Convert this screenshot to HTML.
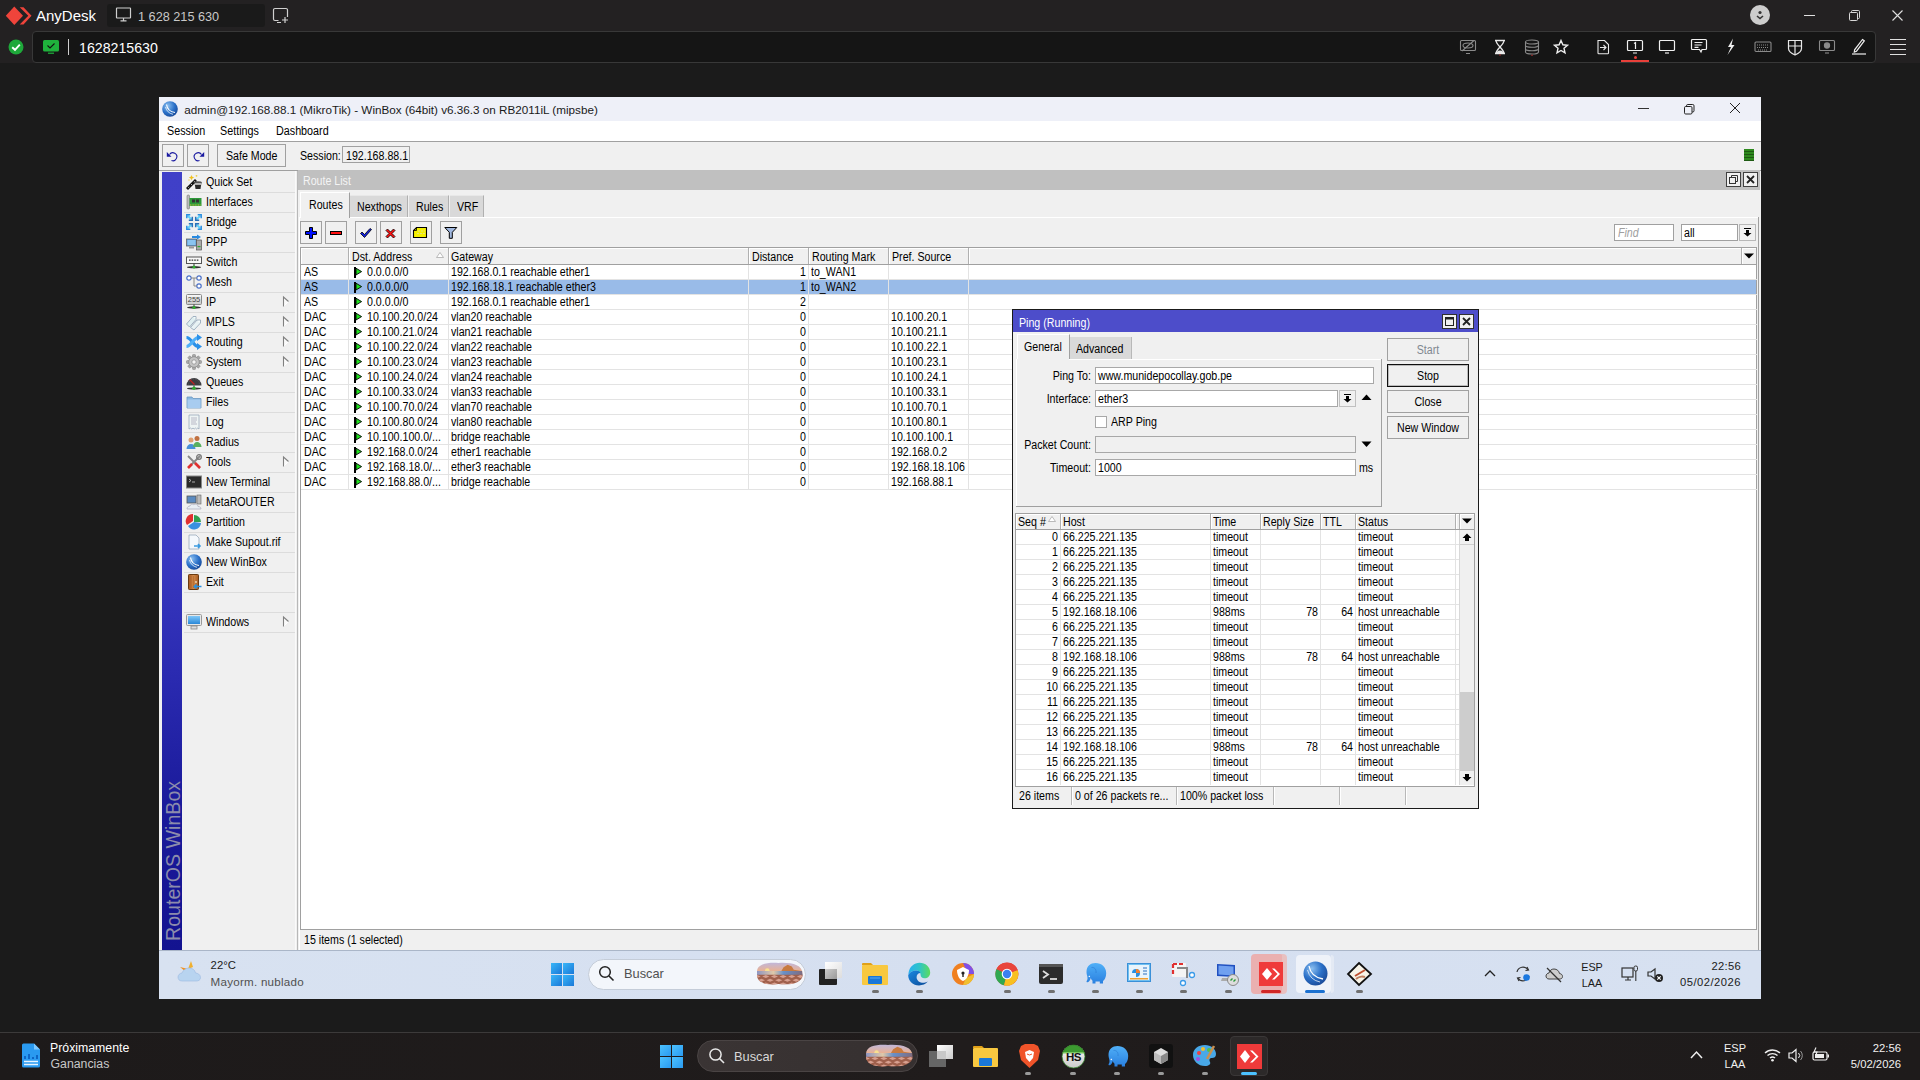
<!DOCTYPE html>
<html><head><meta charset="utf-8">
<style>
*{margin:0;padding:0;box-sizing:border-box}
html,body{width:1920px;height:1080px;overflow:hidden;background:#1b1b1b;font-family:"Liberation Sans",sans-serif;position:relative}
.a{position:absolute}
.t{position:absolute;white-space:nowrap;line-height:1}
svg.a{overflow:visible}
</style></head><body>
<div class="a" style="left:0;top:0;width:1920px;height:63px;background:#232122"></div>
<svg class="a" style="left:4px;top:5px" width="28" height="22" viewBox="0 0 28 22"><path d="M10.3 1.5 L19 10.8 L10.3 20 L1.8 10.8 Z" fill="#ef443b"/><path d="M17.2 2.2 L25.8 10.8 L17.2 19.5 L21 19.5 L29 10.8 L21 2.2 Z" fill="#ef443b" transform="translate(-1.5,0)"/></svg>
<div class="t" style="left:36px;top:7.8px;font-size:15px;color:#fff">AnyDesk</div>
<div class="a" style="left:107px;top:4px;width:158px;height:23px;background:#1a1a1a;border-radius:3px"></div>
<svg class="a" style="left:115px;top:7px" width="18" height="16" viewBox="0 0 18 16" fill="none" stroke="#cfcfcf" stroke-width="1.2"><rect x="1.5" x2="0" y="1" width="14" height="10" rx="0.5"/><path d="M8.5 11v2.5M5.5 13.8h6"/></svg>
<div class="t" style="left:138px;top:10.8px;font-size:12.7px;color:#c8c8c8">1 628 215 630</div>
<svg class="a" style="left:272px;top:7px" width="18" height="17" viewBox="0 0 18 17" fill="none" stroke="#d0d0d0" stroke-width="1.2"><path d="M6.5 13.5H3a1.5 1.5 0 0 1-1.5-1.5V3A1.5 1.5 0 0 1 3 1.5h11A1.5 1.5 0 0 1 15.5 3v7"/><path d="M13 10v6M10 13h6M5 15.5h4"/></svg>
<div class="a" style="left:1750px;top:5px;width:20px;height:20px;border-radius:50%;background:#cdcdcd"></div>
<svg class="a" style="left:1752px;top:7px" width="16" height="16" viewBox="0 0 16 16"><circle cx="8" cy="5.5" r="1.6" fill="#333"/><path d="M5 9 L8 11.5 L11 9" stroke="#333" stroke-width="1.6" fill="none"/></svg>
<div class="a" style="left:1804px;top:15px;width:11px;height:1px;background:#e0e0e0"></div>
<svg class="a" style="left:1848px;top:9px" width="13" height="13" viewBox="0 0 13 13" fill="none" stroke="#d8d8d8" stroke-width="1"><rect x="1.5" y="3.5" width="8" height="8" rx="1"/><path d="M3.5 3.5V2.5a1 1 0 0 1 1-1h6a1 1 0 0 1 1 1v6a1 1 0 0 1-1 1h-1"/></svg>
<svg class="a" style="left:1892px;top:9.5px" width="11" height="11" viewBox="0 0 11 11" stroke="#e0e0e0" stroke-width="1.1"><path d="M.5 .5L10.5 10.5M10.5 .5L.5 10.5"/></svg>
<div class="a" style="left:32px;top:31px;width:1844px;height:32px;background:#151515;border:1px solid #383838;border-radius:4px"></div>
<svg class="a" style="left:8px;top:39px" width="16" height="16" viewBox="0 0 16 16"><circle cx="8" cy="8" r="7.5" fill="#1ea83a"/><path d="M4.2 8.2 L7 10.8 L11.8 5.6" stroke="#fff" stroke-width="1.9" fill="none"/></svg>
<svg class="a" style="left:42px;top:39px" width="18" height="16" viewBox="0 0 18 16"><rect x="1" y="1" width="16" height="11.5" rx="1.5" fill="#1fb23c"/><path d="M5.5 6.5 L8 9 L12.5 4.5" stroke="#111" stroke-width="1.1" fill="none"/><rect x="6" y="13.6" width="6" height="1.2" fill="#1fb23c"/></svg>
<div class="a" style="left:68px;top:39px;width:1px;height:16px;background:#cfcfcf"></div>
<div class="t" style="left:79px;top:40.7px;font-size:14.2px;color:#fff">1628215630</div>
<svg class="a" style="left:1459px;top:39px" width="18" height="16" viewBox="0 0 18 16" fill="none" stroke="#8a8a8a" stroke-width="1.1"><rect x="1.5" y="1.5" width="15" height="10" rx="1"/><ellipse cx="9" cy="6.5" rx="5" ry="2.5"/><path d="M3 12 L15 1.5M7 14.5h4"/></svg>
<svg class="a" style="left:1493px;top:39px" width="14" height="17" viewBox="0 0 14 17" fill="none" stroke="#e8e8e8" stroke-width="1.3"><path d="M2 1.5h10M2 14.5h10M3 1.5 C3 6 11 10 11 14.5M11 1.5 C11 6 3 10 3 14.5"/><path d="M4 13.5 Q7 11 10 13.5Z" fill="#e8e8e8"/><circle cx="7" cy="16" r="0.8" fill="#b03030" stroke="none"/></svg>
<svg class="a" style="left:1524px;top:39px" width="16" height="17" viewBox="0 0 16 17" fill="none" stroke="#8a8a8a" stroke-width="1.1"><ellipse cx="8" cy="3" rx="6.5" ry="2"/><path d="M1.5 3v10c0 1.2 3 2 6.5 2s6.5-.8 6.5-2V3M1.5 6.3c0 1.2 3 2 6.5 2s6.5-.8 6.5-2M1.5 9.7c0 1.2 3 2 6.5 2s6.5-.8 6.5-2"/><circle cx="8" cy="16.3" r="0.8" fill="#b03030" stroke="none"/></svg>
<svg class="a" style="left:1553px;top:39px" width="16" height="16" viewBox="0 0 16 16" fill="none" stroke="#f0f0f0" stroke-width="1.4"><path d="M8 1.5 L9.9 5.8 L14.5 6.2 L11 9.3 L12 13.9 L8 11.5 L4 13.9 L5 9.3 L1.5 6.2 L6.1 5.8 Z"/></svg>
<svg class="a" style="left:1596px;top:39px" width="14" height="16" viewBox="0 0 14 16" fill="none" stroke="#e8e8e8" stroke-width="1.1"><path d="M2 1.5h6.5L12.5 5.5V14a.8.8 0 0 1-.8.8H2.8A.8.8 0 0 1 2 14Z"/><path d="M4 8.5h6M7.5 6L10 8.5 7.5 11"/></svg>
<svg class="a" style="left:1626px;top:39px" width="18" height="16" viewBox="0 0 18 16" fill="none" stroke="#f0f0f0" stroke-width="1.2"><rect x="1.5" y="1.5" width="15" height="10" rx="1"/><path d="M7 14h4M8 4.5l1.5-1v6.5"/></svg>
<div class="a" style="left:1634px;top:56px;width:3px;height:3px;border-radius:50%;background:#e8403a"></div>
<div class="a" style="left:1621px;top:60px;width:28px;height:2px;background:#e8403a"></div>
<svg class="a" style="left:1658px;top:39px" width="18" height="16" viewBox="0 0 18 16" fill="none" stroke="#f0f0f0" stroke-width="1.2"><rect x="1.5" y="1.5" width="15" height="10" rx="1"/><path d="M7 14h4"/></svg>
<svg class="a" style="left:1690px;top:38px" width="18" height="17" viewBox="0 0 18 17" fill="none" stroke="#f0f0f0" stroke-width="1.2"><path d="M2.5 1.5h13a1 1 0 0 1 1 1v8a1 1 0 0 1-1 1H12l-1 2.5-1.5-2.5H2.5a1 1 0 0 1-1-1v-8a1 1 0 0 1 1-1Z"/><path d="M4.5 4.5h8M4.5 7h7M4.5 9.3h4"/></svg>
<svg class="a" style="left:1726px;top:38px" width="10" height="18" viewBox="0 0 10 18" fill="#f0f0f0"><path d="M7 0.5 L2 9 L5 9 L1.5 17 L8.5 7 L5.5 7 Z"/></svg>
<svg class="a" style="left:1754px;top:41px" width="18" height="12" viewBox="0 0 18 12" fill="none" stroke="#8a8a8a" stroke-width="1.1"><rect x="1" y="1" width="16" height="9.5" rx="1"/><path d="M3 4h12M3 6.5h12M4 9h10" stroke-dasharray="1 1"/></svg>
<svg class="a" style="left:1787px;top:39px" width="16" height="17" viewBox="0 0 16 17" fill="none" stroke="#e8e8e8" stroke-width="1.2"><path d="M1.5 1.5h13v8c0 3-3 5-6.5 6.5C4.5 14.5 1.5 12.5 1.5 9.5Z"/><path d="M8 1.5V16M1.5 7h13"/></svg>
<svg class="a" style="left:1818px;top:39px" width="18" height="16" viewBox="0 0 18 16" fill="none" stroke="#8a8a8a" stroke-width="1.1"><rect x="1.5" y="1.5" width="15" height="10" rx="1"/><circle cx="9" cy="6.5" r="2.6" fill="#8a8a8a"/><path d="M7 14h4"/></svg>
<svg class="a" style="left:1851px;top:38px" width="16" height="17" viewBox="0 0 16 17" fill="none" stroke="#f0f0f0" stroke-width="1.2"><path d="M11.5 1.5 L13.3 2.8 L5.5 13.2 L3.3 14 L3.6 11.8 Z"/><path d="M1 16h14"/></svg>
<div class="a" style="left:1890px;top:39px;width:16px;height:1px;background:#e0e0e0"></div>
<div class="a" style="left:1890px;top:44px;width:16px;height:1px;background:#e0e0e0"></div>
<div class="a" style="left:1890px;top:49px;width:16px;height:1px;background:#e0e0e0"></div>
<div class="a" style="left:1890px;top:54px;width:16px;height:1px;background:#e0e0e0"></div>
<div class="a" style="left:159px;top:97px;width:1602px;height:853px;background:#f0f0f0;"></div>
<div class="a" style="left:159px;top:97px;width:1602px;height:24px;background:#eef0f8;"></div>
<svg class="a" style="left:162px;top:101px" width="16" height="16" viewBox="0 0 16 16"><defs><radialGradient id="wg" cx="35%" cy="30%" r="75%"><stop offset="0" stop-color="#8cc0f0"/><stop offset=".6" stop-color="#2a70c8"/><stop offset="1" stop-color="#1a4a98"/></radialGradient></defs><circle cx="8" cy="8" r="7.8" fill="url(#wg)"/><path d="M4.5 3.5 Q5.5 10.5 13 11.5" stroke="#fff" stroke-width="1.1" fill="none"/><path d="M3.5 6 Q5 12 11 13.3" stroke="#fff" stroke-width=".9" fill="none" opacity=".8"/></svg>
<div class="t" style="left:184.30px;top:104.10px;font-size:11.7px;color:#1a1a1a;">admin@192.168.88.1 (MikroTik) - WinBox (64bit) v6.36.3 on RB2011iL (mipsbe)</div>
<div class="a" style="left:1638px;top:108px;width:11px;height:1px;background:#333;"></div>
<svg class="a" style="left:1683px;top:103px" width="12" height="12" viewBox="0 0 12 12"><rect x="1.5" y="3.5" width="7.5" height="7.5" rx="1.2" fill="none" stroke="#222" stroke-width="1"/><path d="M3.5 3.5V2.8a1.3 1.3 0 0 1 1.3-1.3h4.9a1.3 1.3 0 0 1 1.3 1.3v4.9a1.3 1.3 0 0 1-1.3 1.3H9" fill="none" stroke="#222" stroke-width="1"/></svg>
<svg class="a" style="left:1729px;top:102px" width="12" height="12" viewBox="0 0 12 12"><path d="M1 1L11 11M11 1L1 11" stroke="#222" stroke-width="1"/></svg>
<div class="a" style="left:159px;top:121px;width:1602px;height:20px;background:#ffffff;"></div>
<div class="t" style="left:167.20px;top:124.59px;font-size:12.3px;color:#000;transform:scaleX(0.875);transform-origin:0 0;">Session</div>
<div class="t" style="left:220.00px;top:124.59px;font-size:12.3px;color:#000;transform:scaleX(0.875);transform-origin:0 0;">Settings</div>
<div class="t" style="left:276.30px;top:124.59px;font-size:12.3px;color:#000;transform:scaleX(0.875);transform-origin:0 0;">Dashboard</div>
<div class="a" style="left:159px;top:141px;width:1602px;height:1px;background:#a0a0a0;"></div>
<div class="a" style="left:162px;top:144px;width:22px;height:23px;border:1px solid #a0a0a0;"></div>
<div class="a" style="left:187px;top:144px;width:22px;height:23px;border:1px solid #a0a0a0;"></div>
<svg class="a" style="left:166px;top:150px" width="14" height="12" viewBox="0 0 14 12"><path d="M3.5 4.5 A4 4 0 1 1 5.5 10.5" stroke="#1a1aa0" stroke-width="1.1" fill="none"/><path d="M0.8 2 L0.8 6.8 L5.5 6.8 Z" fill="#1a1aa0"/></svg>
<svg class="a" style="left:191px;top:150px" width="14" height="12" viewBox="0 0 14 12"><path d="M10.5 4.5 A4 4 0 1 0 8.5 10.5" stroke="#1a1aa0" stroke-width="1.1" fill="none"/><path d="M13.2 2 L13.2 6.8 L8.5 6.8 Z" fill="#1a1aa0"/></svg>
<div class="a" style="left:217px;top:144px;width:69px;height:23px;border:1px solid #a0a0a0;"></div>
<div class="t" style="left:226.00px;top:149.59px;font-size:12.3px;color:#000;transform:scaleX(0.865);transform-origin:0 0;">Safe Mode</div>
<div class="t" style="left:300.20px;top:149.59px;font-size:12.3px;color:#000;transform:scaleX(0.865);transform-origin:0 0;">Session:</div>
<div class="a" style="left:342px;top:146px;width:68px;height:17px;background:#f0f0f0;border:1px solid #a0a0a0;"></div>
<div class="t" style="left:345.50px;top:149.59px;font-size:12.3px;color:#000;transform:scaleX(0.865);transform-origin:0 0;">192.168.88.1</div>
<div class="a" style="left:1744px;top:149px;width:10px;height:12px;background:#2a7a1a;background:repeating-linear-gradient(#2e8a1e 0 2px,#1e5a12 2px 3px)"></div>
<div class="a" style="left:159px;top:170px;width:1602px;height:1px;background:#a0a0a0;"></div>
<div class="a" style="left:162px;top:172px;width:20px;height:778px;background:linear-gradient(#4040c8 0%,#3c3cc4 45%,#2a2ab0 65%,#1a1a9a 82%,#131390 100%)"></div>
<svg class="a" style="left:186px;top:174px" width="16" height="16" viewBox="0 0 16 16"><path d="M1 15 L10 6" stroke="#111" stroke-width="2.8"/><path d="M2.2 13.8 L3.2 12.8M5 11L6 10M7.8 8.2L8.8 7.2" stroke="#ccc" stroke-width=".9"/><path d="M8.5 8.5 H15.5 L14.5 15 H9.5 Z" fill="#2a2a2a"/><ellipse cx="12" cy="8.5" rx="3.8" ry="1.3" fill="#555"/><path d="M9 10h6" stroke="#ddd" stroke-width="1.5"/><path d="M5.5 1l.8 1.8 1.8.8-1.8.8-.8 1.8-.8-1.8-1.8-.8 1.8-.8z" fill="#f0c020"/><circle cx="10.5" cy="1.8" r=".9" fill="#f0d040"/><circle cx="3" cy="6" r=".7" fill="#f0d040"/></svg>
<div class="t" style="left:205.80px;top:175.59px;font-size:12.3px;color:#000;transform:scaleX(0.865);transform-origin:0 0;">Quick Set</div>
<div class="a" style="left:184px;top:192px;width:111px;height:1px;background:#dcdcdc;"></div>
<svg class="a" style="left:186px;top:194px" width="16" height="16" viewBox="0 0 16 16"><rect x="1" y="1" width="2.5" height="14" rx="1" fill="#bbb" stroke="#777" stroke-width=".6"/><rect x="3.5" y="4" width="12" height="8" fill="#2e9a3a"/><rect x="6" y="5.5" width="3" height="3" fill="#333"/><rect x="10" y="5.5" width="3" height="3" fill="#333"/><path d="M4 11h11" stroke="#d0c040" stroke-width="1.2" stroke-dasharray="1 .6"/></svg>
<div class="t" style="left:205.80px;top:195.59px;font-size:12.3px;color:#000;transform:scaleX(0.865);transform-origin:0 0;">Interfaces</div>
<div class="a" style="left:184px;top:212px;width:111px;height:1px;background:#dcdcdc;"></div>
<svg class="a" style="left:186px;top:214px" width="16" height="16" viewBox="0 0 16 16"><g><path d="M1.8 1.8L5.5 5.5" stroke="#60d0f8" stroke-width="2"/><path d="M0.8 4.3V0.8H4.3" stroke="#2a8ee0" stroke-width="1.5" fill="none"/><path d="M2.8 6.3H6.3V2.8" stroke="#2a70b8" stroke-width="1.5" fill="none"/></g><g transform="translate(16 0) scale(-1 1)"><path d="M1.8 1.8L5.5 5.5" stroke="#60d0f8" stroke-width="2"/><path d="M0.8 4.3V0.8H4.3" stroke="#2a8ee0" stroke-width="1.5" fill="none"/><path d="M2.8 6.3H6.3V2.8" stroke="#2a70b8" stroke-width="1.5" fill="none"/></g><g transform="translate(0 16) scale(1 -1)"><path d="M1.8 1.8L5.5 5.5" stroke="#60d0f8" stroke-width="2"/><path d="M0.8 4.3V0.8H4.3" stroke="#2a8ee0" stroke-width="1.5" fill="none"/><path d="M2.8 6.3H6.3V2.8" stroke="#2a70b8" stroke-width="1.5" fill="none"/></g><g transform="translate(16 16) scale(-1 -1)"><path d="M1.8 1.8L5.5 5.5" stroke="#60d0f8" stroke-width="2"/><path d="M0.8 4.3V0.8H4.3" stroke="#2a8ee0" stroke-width="1.5" fill="none"/><path d="M2.8 6.3H6.3V2.8" stroke="#2a70b8" stroke-width="1.5" fill="none"/></g></svg>
<div class="t" style="left:205.80px;top:215.59px;font-size:12.3px;color:#000;transform:scaleX(0.865);transform-origin:0 0;">Bridge</div>
<div class="a" style="left:184px;top:232px;width:111px;height:1px;background:#dcdcdc;"></div>
<svg class="a" style="left:186px;top:234px" width="16" height="16" viewBox="0 0 16 16"><rect x="0.5" y="5" width="10" height="7" fill="#5a9ad8" stroke="#666" stroke-width=".8"/><rect x="1.5" y="6" width="8" height="5" fill="#8ac4f0"/><rect x="3" y="12.5" width="5" height="2" fill="#999"/><rect x="10.5" y="6" width="5" height="10" fill="#aaa" stroke="#555" stroke-width=".7"/><rect x="11.5" y="12" width="3" height="1.2" fill="#3a3"/><path d="M6 3h6" stroke="#2a8ae0" stroke-width="2"/><path d="M11 0.5 L15 3 L11 5.5Z" fill="#2a8ae0"/></svg>
<div class="t" style="left:205.80px;top:235.59px;font-size:12.3px;color:#000;transform:scaleX(0.865);transform-origin:0 0;">PPP</div>
<div class="a" style="left:184px;top:252px;width:111px;height:1px;background:#dcdcdc;"></div>
<svg class="a" style="left:186px;top:254px" width="16" height="16" viewBox="0 0 16 16"><rect x="0.5" y="3" width="15" height="6.5" fill="#f8f8f8" stroke="#555" stroke-width="1"/><path d="M3 6.2h1.6M5.6 6.2h1.6M8.2 6.2h1.6M10.8 6.2h1.6" stroke="#333" stroke-width="1.3"/><ellipse cx="8" cy="13.2" rx="7" ry="1.1" fill="#333"/><path d="M8 9.5v3.5" stroke="#333" stroke-width="1"/><circle cx="8" cy="13" r="1.6" fill="#30b030"/></svg>
<div class="t" style="left:205.80px;top:255.59px;font-size:12.3px;color:#000;transform:scaleX(0.865);transform-origin:0 0;">Switch</div>
<div class="a" style="left:184px;top:272px;width:111px;height:1px;background:#dcdcdc;"></div>
<svg class="a" style="left:186px;top:274px" width="16" height="16" viewBox="0 0 16 16"><circle cx="3" cy="4" r="2.2" fill="#fff" stroke="#4a70c8" stroke-width="1.2"/><circle cx="13" cy="4" r="2.2" fill="#fff" stroke="#4a70c8" stroke-width="1.2"/><circle cx="13" cy="12" r="2.2" fill="#fff" stroke="#4a70c8" stroke-width="1.2"/><path d="M5 4h3v8h3M8 4h3" stroke="#888" stroke-width="1" fill="none"/></svg>
<div class="t" style="left:205.80px;top:275.59px;font-size:12.3px;color:#000;transform:scaleX(0.865);transform-origin:0 0;">Mesh</div>
<div class="a" style="left:184px;top:292px;width:111px;height:1px;background:#dcdcdc;"></div>
<svg class="a" style="left:186px;top:294px" width="16" height="16" viewBox="0 0 16 16"><defs><linearGradient id="ipg" x1="0" y1="0" x2="0" y2="1"><stop offset="0" stop-color="#fafafa"/><stop offset="1" stop-color="#c8c8c8"/></linearGradient></defs><rect x="0.5" y="0.5" width="15" height="10" rx="1" fill="url(#ipg)" stroke="#888" stroke-width="1"/><text x="8" y="8.3" font-size="7.5" text-anchor="middle" font-family="Liberation Sans" fill="#444">255</text><ellipse cx="8" cy="13.5" rx="7" ry="1.2" fill="#333"/><path d="M8 10.5v3" stroke="#333" stroke-width="1"/><circle cx="8" cy="13.5" r="1.6" fill="#30b030"/></svg>
<div class="t" style="left:205.80px;top:295.59px;font-size:12.3px;color:#000;transform:scaleX(0.865);transform-origin:0 0;">IP</div>
<svg class="a" style="left:282px;top:295.5px" width="8" height="12" viewBox="0 0 8 12"><path d="M1.5 1 L6.5 5.5 L1.5 10.5" fill="#fafafa" stroke="#fff" stroke-width="1"/><path d="M1.5 10.5 V1 L6.5 5.5" fill="none" stroke="#808080" stroke-width="1.1"/></svg>
<div class="a" style="left:184px;top:312px;width:111px;height:1px;background:#dcdcdc;"></div>
<svg class="a" style="left:186px;top:314px" width="16" height="16" viewBox="0 0 16 16"><path d="M0.5 10 L7 2.5 H10 V5.5 L3.5 13 Z" fill="#dfeef0" stroke="#9ab" stroke-width=".9"/><path d="M4.5 13.5 L11 6 H14.5 V9 L8 16 Z" fill="#e8f2f4" stroke="#9ab" stroke-width=".9"/><circle cx="8.8" cy="3.8" r=".7" fill="#fff"/><circle cx="13" cy="7.3" r=".7" fill="#fff"/></svg>
<div class="t" style="left:205.80px;top:315.59px;font-size:12.3px;color:#000;transform:scaleX(0.865);transform-origin:0 0;">MPLS</div>
<svg class="a" style="left:282px;top:315.5px" width="8" height="12" viewBox="0 0 8 12"><path d="M1.5 1 L6.5 5.5 L1.5 10.5" fill="#fafafa" stroke="#fff" stroke-width="1"/><path d="M1.5 10.5 V1 L6.5 5.5" fill="none" stroke="#808080" stroke-width="1.1"/></svg>
<div class="a" style="left:184px;top:332px;width:111px;height:1px;background:#dcdcdc;"></div>
<svg class="a" style="left:186px;top:334px" width="16" height="16" viewBox="0 0 16 16"><path d="M0.5 3.5 C5 3.5 8 12.5 12 12.5" stroke="#2a90e8" stroke-width="3.2" fill="none"/><path d="M0.5 12.5 C5 12.5 8 3.5 12 3.5" stroke="#50b0f8" stroke-width="3.2" fill="none"/><path d="M11 0 L16 3.5 L11 7Z M11 9 L16 12.5 L11 16Z" fill="#2a90e8"/></svg>
<div class="t" style="left:205.80px;top:335.59px;font-size:12.3px;color:#000;transform:scaleX(0.865);transform-origin:0 0;">Routing</div>
<svg class="a" style="left:282px;top:335.5px" width="8" height="12" viewBox="0 0 8 12"><path d="M1.5 1 L6.5 5.5 L1.5 10.5" fill="#fafafa" stroke="#fff" stroke-width="1"/><path d="M1.5 10.5 V1 L6.5 5.5" fill="none" stroke="#808080" stroke-width="1.1"/></svg>
<div class="a" style="left:184px;top:352px;width:111px;height:1px;background:#dcdcdc;"></div>
<svg class="a" style="left:186px;top:354px" width="16" height="16" viewBox="0 0 16 16"><g fill="#a8a8a8" stroke="#888" stroke-width=".6"><rect x="6.5" y="0.5" width="3" height="15" rx=".8"/><rect x="6.5" y="0.5" width="3" height="15" rx=".8" transform="rotate(45 8 8)"/><rect x="6.5" y="0.5" width="3" height="15" rx=".8" transform="rotate(90 8 8)"/><rect x="6.5" y="0.5" width="3" height="15" rx=".8" transform="rotate(135 8 8)"/></g><circle cx="8" cy="8" r="5.3" fill="#c4c4c4" stroke="#8a8a8a" stroke-width=".8"/><circle cx="8" cy="8" r="2.2" fill="#f4f4f4" stroke="#888" stroke-width=".7"/></svg>
<div class="t" style="left:205.80px;top:355.59px;font-size:12.3px;color:#000;transform:scaleX(0.865);transform-origin:0 0;">System</div>
<svg class="a" style="left:282px;top:355.5px" width="8" height="12" viewBox="0 0 8 12"><path d="M1.5 1 L6.5 5.5 L1.5 10.5" fill="#fafafa" stroke="#fff" stroke-width="1"/><path d="M1.5 10.5 V1 L6.5 5.5" fill="none" stroke="#808080" stroke-width="1.1"/></svg>
<div class="a" style="left:184px;top:372px;width:111px;height:1px;background:#dcdcdc;"></div>
<svg class="a" style="left:186px;top:374px" width="16" height="16" viewBox="0 0 16 16"><path d="M0.5 11.5 A7.5 7.5 0 0 1 15.5 11.5 Z" fill="#3c3c40"/><path d="M2.5 10.5 A5.5 5.5 0 0 1 13.5 10.5" stroke="#666" stroke-width=".8" fill="none" stroke-dasharray="1 1.5"/><path d="M3.5 5.5 L8.5 10.5" stroke="#c02020" stroke-width="1.3"/><ellipse cx="8" cy="14.5" rx="7" ry="1.1" fill="#333"/><path d="M8 11.5v3" stroke="#333" stroke-width="1"/><circle cx="8" cy="14.3" r="1.7" fill="#30b030"/></svg>
<div class="t" style="left:205.80px;top:375.59px;font-size:12.3px;color:#000;transform:scaleX(0.865);transform-origin:0 0;">Queues</div>
<div class="a" style="left:184px;top:392px;width:111px;height:1px;background:#dcdcdc;"></div>
<svg class="a" style="left:186px;top:394px" width="16" height="16" viewBox="0 0 16 16"><path d="M1 3h5l1 1.5h8V14H1z" fill="#8ab8e0" stroke="#6a98c0" stroke-width=".8"/><rect x="1.5" y="5.5" width="13" height="8.5" fill="#a8ccf0"/></svg>
<div class="t" style="left:205.80px;top:395.59px;font-size:12.3px;color:#000;transform:scaleX(0.865);transform-origin:0 0;">Files</div>
<div class="a" style="left:184px;top:412px;width:111px;height:1px;background:#dcdcdc;"></div>
<svg class="a" style="left:186px;top:414px" width="16" height="16" viewBox="0 0 16 16"><path d="M3 1h10v14l-1.2-1-1.2 1-1.2-1-1.2 1-1.2-1-1.2 1-1.2-1L3 15z" fill="#eef4f4" stroke="#9ab" stroke-width=".8"/><path d="M5 4h6M5 6h6M5 8h5M5 10h6" stroke="#aab" stroke-width=".8"/></svg>
<div class="t" style="left:205.80px;top:415.59px;font-size:12.3px;color:#000;transform:scaleX(0.865);transform-origin:0 0;">Log</div>
<div class="a" style="left:184px;top:432px;width:111px;height:1px;background:#dcdcdc;"></div>
<svg class="a" style="left:186px;top:434px" width="16" height="16" viewBox="0 0 16 16"><circle cx="5" cy="6" r="2.5" fill="#e0a070"/><path d="M0.5 15c0-3 2-5 4.5-5s4.5 2 4.5 5z" fill="#4a90d8"/><circle cx="11" cy="4.5" r="2.5" fill="#c07040"/><path d="M7 13c0-3 2-5 4-5s4.5 2 4.5 5z" fill="#5ab060"/></svg>
<div class="t" style="left:205.80px;top:435.59px;font-size:12.3px;color:#000;transform:scaleX(0.865);transform-origin:0 0;">Radius</div>
<div class="a" style="left:184px;top:452px;width:111px;height:1px;background:#dcdcdc;"></div>
<svg class="a" style="left:186px;top:454px" width="16" height="16" viewBox="0 0 16 16"><path d="M2 2 L14 14" stroke="#888" stroke-width="1.8"/><path d="M9 9 L14 14" stroke="#e03030" stroke-width="2.6"/><path d="M14 2 L3 13" stroke="#888" stroke-width="1.8"/><path d="M2 14 L6 10" stroke="#e03030" stroke-width="2.6"/><circle cx="13" cy="3" r="2.3" fill="none" stroke="#777" stroke-width="1.3"/></svg>
<div class="t" style="left:205.80px;top:455.59px;font-size:12.3px;color:#000;transform:scaleX(0.865);transform-origin:0 0;">Tools</div>
<svg class="a" style="left:282px;top:455.5px" width="8" height="12" viewBox="0 0 8 12"><path d="M1.5 1 L6.5 5.5 L1.5 10.5" fill="#fafafa" stroke="#fff" stroke-width="1"/><path d="M1.5 10.5 V1 L6.5 5.5" fill="none" stroke="#808080" stroke-width="1.1"/></svg>
<div class="a" style="left:184px;top:472px;width:111px;height:1px;background:#dcdcdc;"></div>
<svg class="a" style="left:186px;top:474px" width="16" height="16" viewBox="0 0 16 16"><rect x="0.5" y="2" width="15" height="12" fill="#2a2a2a" stroke="#888" stroke-width="1"/><path d="M3 5l2 1.5-2 1.5M6 8h3" stroke="#ccc" stroke-width=".8" fill="none"/></svg>
<div class="t" style="left:205.80px;top:475.59px;font-size:12.3px;color:#000;transform:scaleX(0.865);transform-origin:0 0;">New Terminal</div>
<div class="a" style="left:184px;top:492px;width:111px;height:1px;background:#dcdcdc;"></div>
<svg class="a" style="left:186px;top:494px" width="16" height="16" viewBox="0 0 16 16"><rect x="1" y="2" width="9" height="7" fill="#5a8ac0" stroke="#555" stroke-width=".8"/><rect x="11" y="1" width="4" height="9" fill="#bbb" stroke="#666" stroke-width=".6"/><path d="M1 15c0-2 1.5-3 3-3 .5-2 3-2.5 4-1 1-1.5 4-1 4 1.5 2 0 3 1 3 2.5z" fill="#e8eef4" stroke="#aab" stroke-width=".7"/></svg>
<div class="t" style="left:205.80px;top:495.59px;font-size:12.3px;color:#000;transform:scaleX(0.865);transform-origin:0 0;">MetaROUTER</div>
<div class="a" style="left:184px;top:512px;width:111px;height:1px;background:#dcdcdc;"></div>
<svg class="a" style="left:186px;top:514px" width="16" height="16" viewBox="0 0 16 16"><path d="M8 8 L8 1 A7 7 0 0 1 15 8 Z" fill="#30a050"/><path d="M8 8 L15 9 A7 7 0 0 1 2 12 Z" fill="#3a90e0"/><path d="M7 7 L1 11 A7 7 0 0 1 7 0 Z" fill="#e03030"/></svg>
<div class="t" style="left:205.80px;top:515.59px;font-size:12.3px;color:#000;transform:scaleX(0.865);transform-origin:0 0;">Partition</div>
<div class="a" style="left:184px;top:532px;width:111px;height:1px;background:#dcdcdc;"></div>
<svg class="a" style="left:186px;top:534px" width="16" height="16" viewBox="0 0 16 16"><path d="M3 1h7l3 3v11H3z" fill="#f4f8fc" stroke="#9ab" stroke-width=".8"/><path d="M8 12h6M12 10l2 2-2 2" stroke="#3a9ae0" stroke-width="1.6" fill="none"/></svg>
<div class="t" style="left:205.80px;top:535.59px;font-size:12.3px;color:#000;transform:scaleX(0.865);transform-origin:0 0;">Make Supout.rif</div>
<div class="a" style="left:184px;top:552px;width:111px;height:1px;background:#dcdcdc;"></div>
<svg class="a" style="left:186px;top:554px" width="16" height="16" viewBox="0 0 16 16"><defs><radialGradient id="nwg" cx="35%" cy="30%" r="75%"><stop offset="0" stop-color="#8cc0f0"/><stop offset=".6" stop-color="#2a70c8"/><stop offset="1" stop-color="#1a4a98"/></radialGradient></defs><circle cx="8" cy="8" r="7.8" fill="url(#nwg)"/><path d="M4.5 3.5 Q5.5 10.5 13 11.5" stroke="#fff" stroke-width="1.1" fill="none"/><path d="M3.5 6 Q5 12 11 13.3" stroke="#fff" stroke-width=".9" fill="none" opacity=".8"/></svg>
<div class="t" style="left:205.80px;top:555.59px;font-size:12.3px;color:#000;transform:scaleX(0.865);transform-origin:0 0;">New WinBox</div>
<div class="a" style="left:184px;top:572px;width:111px;height:1px;background:#dcdcdc;"></div>
<svg class="a" style="left:186px;top:574px" width="16" height="16" viewBox="0 0 16 16"><defs><linearGradient id="exg" x1="0" y1="0" x2="1" y2="0"><stop offset="0" stop-color="#a85a20"/><stop offset=".5" stop-color="#d08848"/><stop offset="1" stop-color="#a85a20"/></linearGradient></defs><rect x="2.5" y="0.5" width="10" height="15" rx=".8" fill="url(#exg)" stroke="#6a3a10" stroke-width="1"/><path d="M5 2v12M7.5 2v12" stroke="#a86028" stroke-width=".6"/><circle cx="10" cy="8" r=".9" fill="#f0e0c0"/><path d="M8 12.5h7.5M10.5 10.5l-2.2 2 2.2 2" stroke="#2a90e0" stroke-width="1.5" fill="none"/></svg>
<div class="t" style="left:205.80px;top:575.59px;font-size:12.3px;color:#000;transform:scaleX(0.865);transform-origin:0 0;">Exit</div>
<div class="a" style="left:184px;top:592px;width:111px;height:1px;background:#dcdcdc;"></div>
<div class="a" style="left:184px;top:612px;width:111px;height:1px;background:#dcdcdc;"></div>
<svg class="a" style="left:186px;top:614px" width="16" height="16" viewBox="0 0 16 16"><defs><linearGradient id="wsg" x1="0" y1="0" x2="0" y2="1"><stop offset="0" stop-color="#80c8f8"/><stop offset="1" stop-color="#2a88d8"/></linearGradient></defs><rect x="0.5" y="0.5" width="15" height="11" rx="1" fill="#e8e8e8" stroke="#999" stroke-width="1"/><rect x="2" y="2" width="12" height="8" fill="url(#wsg)"/><rect x="5" y="12" width="6" height="3" fill="#ddd" stroke="#888" stroke-width=".8"/></svg>
<div class="t" style="left:205.80px;top:615.59px;font-size:12.3px;color:#000;transform:scaleX(0.865);transform-origin:0 0;">Windows</div>
<svg class="a" style="left:282px;top:615.5px" width="8" height="12" viewBox="0 0 8 12"><path d="M1.5 1 L6.5 5.5 L1.5 10.5" fill="#fafafa" stroke="#fff" stroke-width="1"/><path d="M1.5 10.5 V1 L6.5 5.5" fill="none" stroke="#808080" stroke-width="1.1"/></svg>
<div class="a" style="left:184px;top:632px;width:111px;height:1px;background:#dcdcdc;"></div>
<div class="a" style="left:297px;top:171px;width:1px;height:779px;background:#b8b8b8;"></div>
<div class="a" style="left:295px;top:171px;width:1px;height:779px;background:#fafafa;"></div>
<div class="t" style="left:163px;top:940.5px;transform:rotate(-90deg) scale(1,1.07);transform-origin:0 0;font-size:19.6px;color:#8c8cac">RouterOS WinBox</div>
<div class="a" style="left:298px;top:170px;width:1462px;height:20px;background:#c0c0c0;"></div>
<div class="t" style="left:302.50px;top:175.09px;font-size:12.3px;color:#f4f4f4;transform:scaleX(0.865);transform-origin:0 0;">Route List</div>
<div class="a" style="left:1726px;top:172px;width:15px;height:15px;background:#f0f0f0;border:1px solid #404040;"></div>
<svg class="a" style="left:1728px;top:174px" width="11" height="11" viewBox="0 0 11 11"><rect x="1.5" y="3.5" width="6" height="6" fill="none" stroke="#333" stroke-width="1"/><path d="M3.5 3.5V1.5h6v6h-2" fill="none" stroke="#333" stroke-width="1"/></svg>
<div class="a" style="left:1743px;top:172px;width:15px;height:15px;background:#f0f0f0;border:1px solid #404040;"></div>
<svg class="a" style="left:1745px;top:174px" width="11" height="11" viewBox="0 0 11 11"><path d="M2 2L9 9M9 2L2 9" stroke="#222" stroke-width="1.8"/></svg>
<div class="a" style="left:349px;top:217px;width:1410px;height:1px;background:#ffffff;"></div>
<div class="a" style="left:1758px;top:217px;width:1px;height:733px;background:#a0a0a0;"></div>
<div class="a" style="left:299px;top:217px;width:1px;height:733px;background:#ffffff;"></div>
<div class="a" style="left:300px;top:192px;width:50px;height:26px;background:#f0f0f0;border-top:1px solid #fff;border-left:1px solid #fff;border-right:1px solid #a0a0a0"></div>
<div class="t" style="left:308.50px;top:198.59px;font-size:12.3px;color:#000;transform:scaleX(0.865);transform-origin:0 0;">Routes</div>
<div class="a" style="left:350px;top:195px;width:58px;height:22px;background:#d9d9d9;border-right:1px solid #b0b0b0;border-top:1px solid #e8e8e8"></div>
<div class="t" style="left:356.50px;top:200.59px;font-size:12.3px;color:#000;transform:scaleX(0.865);transform-origin:0 0;">Nexthops</div>
<div class="a" style="left:409px;top:195px;width:40px;height:22px;background:#d9d9d9;border-right:1px solid #b0b0b0;border-top:1px solid #e8e8e8"></div>
<div class="t" style="left:415.50px;top:200.59px;font-size:12.3px;color:#000;transform:scaleX(0.865);transform-origin:0 0;">Rules</div>
<div class="a" style="left:450px;top:195px;width:34px;height:22px;background:#d9d9d9;border-right:1px solid #b0b0b0;border-top:1px solid #e8e8e8"></div>
<div class="t" style="left:456.50px;top:200.59px;font-size:12.3px;color:#000;transform:scaleX(0.865);transform-origin:0 0;">VRF</div>
<div class="a" style="left:300px;top:221px;width:22px;height:23px;background:#f0f0f0;border:1px solid #a0a0a0;"></div>
<div class="a" style="left:325px;top:221px;width:22px;height:23px;background:#f0f0f0;border:1px solid #a0a0a0;"></div>
<div class="a" style="left:355px;top:221px;width:22px;height:23px;background:#f0f0f0;border:1px solid #a0a0a0;"></div>
<div class="a" style="left:380px;top:221px;width:22px;height:23px;background:#f0f0f0;border:1px solid #a0a0a0;"></div>
<div class="a" style="left:410px;top:221px;width:22px;height:23px;background:#f0f0f0;border:1px solid #a0a0a0;"></div>
<div class="a" style="left:440px;top:221px;width:22px;height:23px;background:#f0f0f0;border:1px solid #a0a0a0;"></div>
<svg class="a" style="left:305px;top:227px" width="12" height="12" viewBox="0 0 12 12"><path d="M4.5 .5h3v4h4v3h-4v4h-3v-4h-4v-3h4z" fill="#0010ff" stroke="#000" stroke-width="1"/></svg>
<svg class="a" style="left:330px;top:231px" width="12" height="5" viewBox="0 0 12 5"><rect x=".5" y=".5" width="11" height="3" fill="#ff1010" stroke="#000" stroke-width="1"/></svg>
<svg class="a" style="left:360px;top:228px" width="12" height="10" viewBox="0 0 12 10"><path d="M.5 5.5 L4.5 9.5 L11.5 1.5 L10 .5 L4.5 6.5 L2 4 Z" fill="#1020e0" stroke="#000" stroke-width=".8"/></svg>
<svg class="a" style="left:385px;top:228px" width="11" height="11" viewBox="0 0 11 11"><path d="M1 2.5L2.5 1 5.5 4 8.5 1 10 2.5 7 5.5 10 8.5 8.5 10 5.5 7 2.5 10 1 8.5 4 5.5Z" fill="#ff1010" stroke="#000" stroke-width=".8"/></svg>
<svg class="a" style="left:413px;top:227px" width="15" height="12" viewBox="0 0 15 12"><path d="M3.5 .5h10v10H.5V3.5Z" fill="#f4f000" stroke="#000" stroke-width="1.1"/><path d="M3.5 .5V3.5H.5" fill="none" stroke="#000" stroke-width=".8"/><path d="M5 4h7M4 6.5h8" stroke="#e0e0a0" stroke-width=".8" stroke-dasharray="2 1"/></svg>
<svg class="a" style="left:444px;top:226px" width="14" height="13" viewBox="0 0 14 13"><path d="M.8 1.5h12l-4.5 4.8v6h-3v-6Z" fill="#a0b8e0" stroke="#000" stroke-width="1"/></svg>
<div class="a" style="left:1614px;top:224px;width:60px;height:17px;background:#fff;border:1px solid #a0a0a0;"></div>
<div class="t" style="left:1617.50px;top:226.59px;font-size:12.3px;color:#a0a0a0;transform:scaleX(0.865);transform-origin:0 0;font-style:italic;">Find</div>
<div class="a" style="left:1681px;top:224px;width:57px;height:17px;background:#fff;border:1px solid #a0a0a0;"></div>
<div class="t" style="left:1684.00px;top:226.59px;font-size:12.3px;color:#000;transform:scaleX(0.865);transform-origin:0 0;">all</div>
<div class="a" style="left:1739px;top:224px;width:17px;height:17px;background:#f0f0f0;border:1px solid #b8b8b8;"></div>
<svg class="a" style="left:1742px;top:227px" width="11" height="11" viewBox="0 0 11 11"><path d="M2 1.5h7" stroke="#000" stroke-width="1"/><path d="M4 3h3v3h2.5L5.5 9.5 1.5 6H4z" fill="#000"/></svg>
<div class="a" style="left:300px;top:247px;width:1457px;height:683px;background:#ffffff;border:1px solid #a0a0a0;"></div>
<div class="a" style="left:301px;top:248px;width:1455px;height:16px;background:#f0f0f0;border-top:1px solid #fff;border-left:1px solid #fff"></div>
<div class="a" style="left:301px;top:264px;width:1455px;height:1px;background:#a0a0a0;"></div>
<div class="a" style="left:348px;top:248px;width:1px;height:16px;background:#b0b0b0;"></div>
<div class="a" style="left:349px;top:248px;width:1px;height:16px;background:#ffffff;"></div>
<div class="a" style="left:448px;top:248px;width:1px;height:16px;background:#b0b0b0;"></div>
<div class="a" style="left:449px;top:248px;width:1px;height:16px;background:#ffffff;"></div>
<div class="a" style="left:748px;top:248px;width:1px;height:16px;background:#b0b0b0;"></div>
<div class="a" style="left:749px;top:248px;width:1px;height:16px;background:#ffffff;"></div>
<div class="a" style="left:808px;top:248px;width:1px;height:16px;background:#b0b0b0;"></div>
<div class="a" style="left:809px;top:248px;width:1px;height:16px;background:#ffffff;"></div>
<div class="a" style="left:888px;top:248px;width:1px;height:16px;background:#b0b0b0;"></div>
<div class="a" style="left:889px;top:248px;width:1px;height:16px;background:#ffffff;"></div>
<div class="a" style="left:968px;top:248px;width:1px;height:16px;background:#b0b0b0;"></div>
<div class="a" style="left:969px;top:248px;width:1px;height:16px;background:#ffffff;"></div>
<div class="a" style="left:1741px;top:248px;width:1px;height:16px;background:#b0b0b0;"></div>
<div class="a" style="left:1742px;top:248px;width:1px;height:16px;background:#ffffff;"></div>
<svg class="a" style="left:1744px;top:253px" width="10" height="6" viewBox="0 0 10 6"><path d="M0 .5h10L5 5.5Z" fill="#000"/></svg>
<div class="t" style="left:351.70px;top:250.59px;font-size:12.3px;color:#000;transform:scaleX(0.865);transform-origin:0 0;">Dst. Address</div>
<svg class="a" style="left:436px;top:252px" width="8" height="6" viewBox="0 0 8 6"><path d="M4 .5L7.5 5.5H.5Z" fill="#fff" stroke="#aaa" stroke-width=".8"/></svg>
<div class="t" style="left:451.00px;top:250.59px;font-size:12.3px;color:#000;transform:scaleX(0.865);transform-origin:0 0;">Gateway</div>
<div class="t" style="left:751.50px;top:250.59px;font-size:12.3px;color:#000;transform:scaleX(0.865);transform-origin:0 0;">Distance</div>
<div class="t" style="left:811.50px;top:250.59px;font-size:12.3px;color:#000;transform:scaleX(0.865);transform-origin:0 0;">Routing Mark</div>
<div class="t" style="left:891.50px;top:250.59px;font-size:12.3px;color:#000;transform:scaleX(0.865);transform-origin:0 0;">Pref. Source</div>
<div class="a" style="left:301px;top:279px;width:1456px;height:1px;background:#e3e3e3;"></div>
<div class="t" style="left:303.80px;top:265.59px;font-size:12.3px;color:#000;transform:scaleX(0.865);transform-origin:0 0;">AS</div>
<svg class="a" style="left:353px;top:267px" width="10" height="12" viewBox="0 0 10 12"><rect x="1" y="0" width="2" height="11" fill="#000"/><path d="M3 1.2 L8.6 4.6 L3 8Z" fill="#20e020" stroke="#000" stroke-width="0.9" stroke-linejoin="miter"/></svg>
<div class="t" style="left:367.20px;top:265.59px;font-size:12.3px;color:#000;transform:scaleX(0.865);transform-origin:0 0;">0.0.0.0/0</div>
<div class="t" style="left:450.50px;top:265.59px;font-size:12.3px;color:#000;transform:scaleX(0.865);transform-origin:0 0;">192.168.0.1 reachable ether1</div>
<div class="t" style="left:766.00px;width:40px;text-align:right;top:265.59px;font-size:12.3px;color:#000;transform:scaleX(0.865);transform-origin:100% 0;">1</div>
<div class="t" style="left:810.50px;top:265.59px;font-size:12.3px;color:#000;transform:scaleX(0.865);transform-origin:0 0;">to_WAN1</div>
<div class="t" style="left:891.00px;top:265.59px;font-size:12.3px;color:#000;transform:scaleX(0.865);transform-origin:0 0;"></div>
<div class="a" style="left:301px;top:280px;width:1455px;height:14px;background:#99bbe8;"></div>
<div class="a" style="left:301px;top:294px;width:1456px;height:1px;background:#e3e3e3;"></div>
<div class="t" style="left:303.80px;top:280.59px;font-size:12.3px;color:#000;transform:scaleX(0.865);transform-origin:0 0;">AS</div>
<svg class="a" style="left:353px;top:282px" width="10" height="12" viewBox="0 0 10 12"><rect x="1" y="0" width="2" height="11" fill="#000"/><path d="M3 1.2 L8.6 4.6 L3 8Z" fill="#20e020" stroke="#000" stroke-width="0.9" stroke-linejoin="miter"/></svg>
<div class="t" style="left:367.20px;top:280.59px;font-size:12.3px;color:#000;transform:scaleX(0.865);transform-origin:0 0;">0.0.0.0/0</div>
<div class="t" style="left:450.50px;top:280.59px;font-size:12.3px;color:#000;transform:scaleX(0.865);transform-origin:0 0;">192.168.18.1 reachable ether3</div>
<div class="t" style="left:766.00px;width:40px;text-align:right;top:280.59px;font-size:12.3px;color:#000;transform:scaleX(0.865);transform-origin:100% 0;">1</div>
<div class="t" style="left:810.50px;top:280.59px;font-size:12.3px;color:#000;transform:scaleX(0.865);transform-origin:0 0;">to_WAN2</div>
<div class="t" style="left:891.00px;top:280.59px;font-size:12.3px;color:#000;transform:scaleX(0.865);transform-origin:0 0;"></div>
<div class="a" style="left:301px;top:309px;width:1456px;height:1px;background:#e3e3e3;"></div>
<div class="t" style="left:303.80px;top:295.59px;font-size:12.3px;color:#000;transform:scaleX(0.865);transform-origin:0 0;">AS</div>
<svg class="a" style="left:353px;top:297px" width="10" height="12" viewBox="0 0 10 12"><rect x="1" y="0" width="2" height="11" fill="#000"/><path d="M3 1.2 L8.6 4.6 L3 8Z" fill="#20e020" stroke="#000" stroke-width="0.9" stroke-linejoin="miter"/></svg>
<div class="t" style="left:367.20px;top:295.59px;font-size:12.3px;color:#000;transform:scaleX(0.865);transform-origin:0 0;">0.0.0.0/0</div>
<div class="t" style="left:450.50px;top:295.59px;font-size:12.3px;color:#000;transform:scaleX(0.865);transform-origin:0 0;">192.168.0.1 reachable ether1</div>
<div class="t" style="left:766.00px;width:40px;text-align:right;top:295.59px;font-size:12.3px;color:#000;transform:scaleX(0.865);transform-origin:100% 0;">2</div>
<div class="t" style="left:810.50px;top:295.59px;font-size:12.3px;color:#000;transform:scaleX(0.865);transform-origin:0 0;"></div>
<div class="t" style="left:891.00px;top:295.59px;font-size:12.3px;color:#000;transform:scaleX(0.865);transform-origin:0 0;"></div>
<div class="a" style="left:301px;top:324px;width:1456px;height:1px;background:#e3e3e3;"></div>
<div class="t" style="left:303.80px;top:310.59px;font-size:12.3px;color:#000;transform:scaleX(0.865);transform-origin:0 0;">DAC</div>
<svg class="a" style="left:353px;top:312px" width="10" height="12" viewBox="0 0 10 12"><rect x="1" y="0" width="2" height="11" fill="#000"/><path d="M3 1.2 L8.6 4.6 L3 8Z" fill="#20e020" stroke="#000" stroke-width="0.9" stroke-linejoin="miter"/></svg>
<div class="t" style="left:367.20px;top:310.59px;font-size:12.3px;color:#000;transform:scaleX(0.865);transform-origin:0 0;">10.100.20.0/24</div>
<div class="t" style="left:450.50px;top:310.59px;font-size:12.3px;color:#000;transform:scaleX(0.865);transform-origin:0 0;">vlan20 reachable</div>
<div class="t" style="left:766.00px;width:40px;text-align:right;top:310.59px;font-size:12.3px;color:#000;transform:scaleX(0.865);transform-origin:100% 0;">0</div>
<div class="t" style="left:810.50px;top:310.59px;font-size:12.3px;color:#000;transform:scaleX(0.865);transform-origin:0 0;"></div>
<div class="t" style="left:891.00px;top:310.59px;font-size:12.3px;color:#000;transform:scaleX(0.865);transform-origin:0 0;">10.100.20.1</div>
<div class="a" style="left:301px;top:339px;width:1456px;height:1px;background:#e3e3e3;"></div>
<div class="t" style="left:303.80px;top:325.59px;font-size:12.3px;color:#000;transform:scaleX(0.865);transform-origin:0 0;">DAC</div>
<svg class="a" style="left:353px;top:327px" width="10" height="12" viewBox="0 0 10 12"><rect x="1" y="0" width="2" height="11" fill="#000"/><path d="M3 1.2 L8.6 4.6 L3 8Z" fill="#20e020" stroke="#000" stroke-width="0.9" stroke-linejoin="miter"/></svg>
<div class="t" style="left:367.20px;top:325.59px;font-size:12.3px;color:#000;transform:scaleX(0.865);transform-origin:0 0;">10.100.21.0/24</div>
<div class="t" style="left:450.50px;top:325.59px;font-size:12.3px;color:#000;transform:scaleX(0.865);transform-origin:0 0;">vlan21 reachable</div>
<div class="t" style="left:766.00px;width:40px;text-align:right;top:325.59px;font-size:12.3px;color:#000;transform:scaleX(0.865);transform-origin:100% 0;">0</div>
<div class="t" style="left:810.50px;top:325.59px;font-size:12.3px;color:#000;transform:scaleX(0.865);transform-origin:0 0;"></div>
<div class="t" style="left:891.00px;top:325.59px;font-size:12.3px;color:#000;transform:scaleX(0.865);transform-origin:0 0;">10.100.21.1</div>
<div class="a" style="left:301px;top:354px;width:1456px;height:1px;background:#e3e3e3;"></div>
<div class="t" style="left:303.80px;top:340.59px;font-size:12.3px;color:#000;transform:scaleX(0.865);transform-origin:0 0;">DAC</div>
<svg class="a" style="left:353px;top:342px" width="10" height="12" viewBox="0 0 10 12"><rect x="1" y="0" width="2" height="11" fill="#000"/><path d="M3 1.2 L8.6 4.6 L3 8Z" fill="#20e020" stroke="#000" stroke-width="0.9" stroke-linejoin="miter"/></svg>
<div class="t" style="left:367.20px;top:340.59px;font-size:12.3px;color:#000;transform:scaleX(0.865);transform-origin:0 0;">10.100.22.0/24</div>
<div class="t" style="left:450.50px;top:340.59px;font-size:12.3px;color:#000;transform:scaleX(0.865);transform-origin:0 0;">vlan22 reachable</div>
<div class="t" style="left:766.00px;width:40px;text-align:right;top:340.59px;font-size:12.3px;color:#000;transform:scaleX(0.865);transform-origin:100% 0;">0</div>
<div class="t" style="left:810.50px;top:340.59px;font-size:12.3px;color:#000;transform:scaleX(0.865);transform-origin:0 0;"></div>
<div class="t" style="left:891.00px;top:340.59px;font-size:12.3px;color:#000;transform:scaleX(0.865);transform-origin:0 0;">10.100.22.1</div>
<div class="a" style="left:301px;top:369px;width:1456px;height:1px;background:#e3e3e3;"></div>
<div class="t" style="left:303.80px;top:355.59px;font-size:12.3px;color:#000;transform:scaleX(0.865);transform-origin:0 0;">DAC</div>
<svg class="a" style="left:353px;top:357px" width="10" height="12" viewBox="0 0 10 12"><rect x="1" y="0" width="2" height="11" fill="#000"/><path d="M3 1.2 L8.6 4.6 L3 8Z" fill="#20e020" stroke="#000" stroke-width="0.9" stroke-linejoin="miter"/></svg>
<div class="t" style="left:367.20px;top:355.59px;font-size:12.3px;color:#000;transform:scaleX(0.865);transform-origin:0 0;">10.100.23.0/24</div>
<div class="t" style="left:450.50px;top:355.59px;font-size:12.3px;color:#000;transform:scaleX(0.865);transform-origin:0 0;">vlan23 reachable</div>
<div class="t" style="left:766.00px;width:40px;text-align:right;top:355.59px;font-size:12.3px;color:#000;transform:scaleX(0.865);transform-origin:100% 0;">0</div>
<div class="t" style="left:810.50px;top:355.59px;font-size:12.3px;color:#000;transform:scaleX(0.865);transform-origin:0 0;"></div>
<div class="t" style="left:891.00px;top:355.59px;font-size:12.3px;color:#000;transform:scaleX(0.865);transform-origin:0 0;">10.100.23.1</div>
<div class="a" style="left:301px;top:384px;width:1456px;height:1px;background:#e3e3e3;"></div>
<div class="t" style="left:303.80px;top:370.59px;font-size:12.3px;color:#000;transform:scaleX(0.865);transform-origin:0 0;">DAC</div>
<svg class="a" style="left:353px;top:372px" width="10" height="12" viewBox="0 0 10 12"><rect x="1" y="0" width="2" height="11" fill="#000"/><path d="M3 1.2 L8.6 4.6 L3 8Z" fill="#20e020" stroke="#000" stroke-width="0.9" stroke-linejoin="miter"/></svg>
<div class="t" style="left:367.20px;top:370.59px;font-size:12.3px;color:#000;transform:scaleX(0.865);transform-origin:0 0;">10.100.24.0/24</div>
<div class="t" style="left:450.50px;top:370.59px;font-size:12.3px;color:#000;transform:scaleX(0.865);transform-origin:0 0;">vlan24 reachable</div>
<div class="t" style="left:766.00px;width:40px;text-align:right;top:370.59px;font-size:12.3px;color:#000;transform:scaleX(0.865);transform-origin:100% 0;">0</div>
<div class="t" style="left:810.50px;top:370.59px;font-size:12.3px;color:#000;transform:scaleX(0.865);transform-origin:0 0;"></div>
<div class="t" style="left:891.00px;top:370.59px;font-size:12.3px;color:#000;transform:scaleX(0.865);transform-origin:0 0;">10.100.24.1</div>
<div class="a" style="left:301px;top:399px;width:1456px;height:1px;background:#e3e3e3;"></div>
<div class="t" style="left:303.80px;top:385.59px;font-size:12.3px;color:#000;transform:scaleX(0.865);transform-origin:0 0;">DAC</div>
<svg class="a" style="left:353px;top:387px" width="10" height="12" viewBox="0 0 10 12"><rect x="1" y="0" width="2" height="11" fill="#000"/><path d="M3 1.2 L8.6 4.6 L3 8Z" fill="#20e020" stroke="#000" stroke-width="0.9" stroke-linejoin="miter"/></svg>
<div class="t" style="left:367.20px;top:385.59px;font-size:12.3px;color:#000;transform:scaleX(0.865);transform-origin:0 0;">10.100.33.0/24</div>
<div class="t" style="left:450.50px;top:385.59px;font-size:12.3px;color:#000;transform:scaleX(0.865);transform-origin:0 0;">vlan33 reachable</div>
<div class="t" style="left:766.00px;width:40px;text-align:right;top:385.59px;font-size:12.3px;color:#000;transform:scaleX(0.865);transform-origin:100% 0;">0</div>
<div class="t" style="left:810.50px;top:385.59px;font-size:12.3px;color:#000;transform:scaleX(0.865);transform-origin:0 0;"></div>
<div class="t" style="left:891.00px;top:385.59px;font-size:12.3px;color:#000;transform:scaleX(0.865);transform-origin:0 0;">10.100.33.1</div>
<div class="a" style="left:301px;top:414px;width:1456px;height:1px;background:#e3e3e3;"></div>
<div class="t" style="left:303.80px;top:400.59px;font-size:12.3px;color:#000;transform:scaleX(0.865);transform-origin:0 0;">DAC</div>
<svg class="a" style="left:353px;top:402px" width="10" height="12" viewBox="0 0 10 12"><rect x="1" y="0" width="2" height="11" fill="#000"/><path d="M3 1.2 L8.6 4.6 L3 8Z" fill="#20e020" stroke="#000" stroke-width="0.9" stroke-linejoin="miter"/></svg>
<div class="t" style="left:367.20px;top:400.59px;font-size:12.3px;color:#000;transform:scaleX(0.865);transform-origin:0 0;">10.100.70.0/24</div>
<div class="t" style="left:450.50px;top:400.59px;font-size:12.3px;color:#000;transform:scaleX(0.865);transform-origin:0 0;">vlan70 reachable</div>
<div class="t" style="left:766.00px;width:40px;text-align:right;top:400.59px;font-size:12.3px;color:#000;transform:scaleX(0.865);transform-origin:100% 0;">0</div>
<div class="t" style="left:810.50px;top:400.59px;font-size:12.3px;color:#000;transform:scaleX(0.865);transform-origin:0 0;"></div>
<div class="t" style="left:891.00px;top:400.59px;font-size:12.3px;color:#000;transform:scaleX(0.865);transform-origin:0 0;">10.100.70.1</div>
<div class="a" style="left:301px;top:429px;width:1456px;height:1px;background:#e3e3e3;"></div>
<div class="t" style="left:303.80px;top:415.59px;font-size:12.3px;color:#000;transform:scaleX(0.865);transform-origin:0 0;">DAC</div>
<svg class="a" style="left:353px;top:417px" width="10" height="12" viewBox="0 0 10 12"><rect x="1" y="0" width="2" height="11" fill="#000"/><path d="M3 1.2 L8.6 4.6 L3 8Z" fill="#20e020" stroke="#000" stroke-width="0.9" stroke-linejoin="miter"/></svg>
<div class="t" style="left:367.20px;top:415.59px;font-size:12.3px;color:#000;transform:scaleX(0.865);transform-origin:0 0;">10.100.80.0/24</div>
<div class="t" style="left:450.50px;top:415.59px;font-size:12.3px;color:#000;transform:scaleX(0.865);transform-origin:0 0;">vlan80 reachable</div>
<div class="t" style="left:766.00px;width:40px;text-align:right;top:415.59px;font-size:12.3px;color:#000;transform:scaleX(0.865);transform-origin:100% 0;">0</div>
<div class="t" style="left:810.50px;top:415.59px;font-size:12.3px;color:#000;transform:scaleX(0.865);transform-origin:0 0;"></div>
<div class="t" style="left:891.00px;top:415.59px;font-size:12.3px;color:#000;transform:scaleX(0.865);transform-origin:0 0;">10.100.80.1</div>
<div class="a" style="left:301px;top:444px;width:1456px;height:1px;background:#e3e3e3;"></div>
<div class="t" style="left:303.80px;top:430.59px;font-size:12.3px;color:#000;transform:scaleX(0.865);transform-origin:0 0;">DAC</div>
<svg class="a" style="left:353px;top:432px" width="10" height="12" viewBox="0 0 10 12"><rect x="1" y="0" width="2" height="11" fill="#000"/><path d="M3 1.2 L8.6 4.6 L3 8Z" fill="#20e020" stroke="#000" stroke-width="0.9" stroke-linejoin="miter"/></svg>
<div class="t" style="left:367.20px;top:430.59px;font-size:12.3px;color:#000;transform:scaleX(0.865);transform-origin:0 0;">10.100.100.0/...</div>
<div class="t" style="left:450.50px;top:430.59px;font-size:12.3px;color:#000;transform:scaleX(0.865);transform-origin:0 0;">bridge reachable</div>
<div class="t" style="left:766.00px;width:40px;text-align:right;top:430.59px;font-size:12.3px;color:#000;transform:scaleX(0.865);transform-origin:100% 0;">0</div>
<div class="t" style="left:810.50px;top:430.59px;font-size:12.3px;color:#000;transform:scaleX(0.865);transform-origin:0 0;"></div>
<div class="t" style="left:891.00px;top:430.59px;font-size:12.3px;color:#000;transform:scaleX(0.865);transform-origin:0 0;">10.100.100.1</div>
<div class="a" style="left:301px;top:459px;width:1456px;height:1px;background:#e3e3e3;"></div>
<div class="t" style="left:303.80px;top:445.59px;font-size:12.3px;color:#000;transform:scaleX(0.865);transform-origin:0 0;">DAC</div>
<svg class="a" style="left:353px;top:447px" width="10" height="12" viewBox="0 0 10 12"><rect x="1" y="0" width="2" height="11" fill="#000"/><path d="M3 1.2 L8.6 4.6 L3 8Z" fill="#20e020" stroke="#000" stroke-width="0.9" stroke-linejoin="miter"/></svg>
<div class="t" style="left:367.20px;top:445.59px;font-size:12.3px;color:#000;transform:scaleX(0.865);transform-origin:0 0;">192.168.0.0/24</div>
<div class="t" style="left:450.50px;top:445.59px;font-size:12.3px;color:#000;transform:scaleX(0.865);transform-origin:0 0;">ether1 reachable</div>
<div class="t" style="left:766.00px;width:40px;text-align:right;top:445.59px;font-size:12.3px;color:#000;transform:scaleX(0.865);transform-origin:100% 0;">0</div>
<div class="t" style="left:810.50px;top:445.59px;font-size:12.3px;color:#000;transform:scaleX(0.865);transform-origin:0 0;"></div>
<div class="t" style="left:891.00px;top:445.59px;font-size:12.3px;color:#000;transform:scaleX(0.865);transform-origin:0 0;">192.168.0.2</div>
<div class="a" style="left:301px;top:474px;width:1456px;height:1px;background:#e3e3e3;"></div>
<div class="t" style="left:303.80px;top:460.59px;font-size:12.3px;color:#000;transform:scaleX(0.865);transform-origin:0 0;">DAC</div>
<svg class="a" style="left:353px;top:462px" width="10" height="12" viewBox="0 0 10 12"><rect x="1" y="0" width="2" height="11" fill="#000"/><path d="M3 1.2 L8.6 4.6 L3 8Z" fill="#20e020" stroke="#000" stroke-width="0.9" stroke-linejoin="miter"/></svg>
<div class="t" style="left:367.20px;top:460.59px;font-size:12.3px;color:#000;transform:scaleX(0.865);transform-origin:0 0;">192.168.18.0/...</div>
<div class="t" style="left:450.50px;top:460.59px;font-size:12.3px;color:#000;transform:scaleX(0.865);transform-origin:0 0;">ether3 reachable</div>
<div class="t" style="left:766.00px;width:40px;text-align:right;top:460.59px;font-size:12.3px;color:#000;transform:scaleX(0.865);transform-origin:100% 0;">0</div>
<div class="t" style="left:810.50px;top:460.59px;font-size:12.3px;color:#000;transform:scaleX(0.865);transform-origin:0 0;"></div>
<div class="t" style="left:891.00px;top:460.59px;font-size:12.3px;color:#000;transform:scaleX(0.865);transform-origin:0 0;">192.168.18.106</div>
<div class="a" style="left:301px;top:489px;width:1456px;height:1px;background:#e3e3e3;"></div>
<div class="t" style="left:303.80px;top:475.59px;font-size:12.3px;color:#000;transform:scaleX(0.865);transform-origin:0 0;">DAC</div>
<svg class="a" style="left:353px;top:477px" width="10" height="12" viewBox="0 0 10 12"><rect x="1" y="0" width="2" height="11" fill="#000"/><path d="M3 1.2 L8.6 4.6 L3 8Z" fill="#20e020" stroke="#000" stroke-width="0.9" stroke-linejoin="miter"/></svg>
<div class="t" style="left:367.20px;top:475.59px;font-size:12.3px;color:#000;transform:scaleX(0.865);transform-origin:0 0;">192.168.88.0/...</div>
<div class="t" style="left:450.50px;top:475.59px;font-size:12.3px;color:#000;transform:scaleX(0.865);transform-origin:0 0;">bridge reachable</div>
<div class="t" style="left:766.00px;width:40px;text-align:right;top:475.59px;font-size:12.3px;color:#000;transform:scaleX(0.865);transform-origin:100% 0;">0</div>
<div class="t" style="left:810.50px;top:475.59px;font-size:12.3px;color:#000;transform:scaleX(0.865);transform-origin:0 0;"></div>
<div class="t" style="left:891.00px;top:475.59px;font-size:12.3px;color:#000;transform:scaleX(0.865);transform-origin:0 0;">192.168.88.1</div>
<div class="a" style="left:348px;top:265px;width:1px;height:225px;background:#e3e3e3;"></div>
<div class="a" style="left:448px;top:265px;width:1px;height:225px;background:#e3e3e3;"></div>
<div class="a" style="left:748px;top:265px;width:1px;height:225px;background:#e3e3e3;"></div>
<div class="a" style="left:808px;top:265px;width:1px;height:225px;background:#e3e3e3;"></div>
<div class="a" style="left:888px;top:265px;width:1px;height:225px;background:#e3e3e3;"></div>
<div class="a" style="left:968px;top:265px;width:1px;height:225px;background:#e3e3e3;"></div>
<div class="t" style="left:303.80px;top:933.59px;font-size:12.3px;color:#000;transform:scaleX(0.865);transform-origin:0 0;">15 items (1 selected)</div>
<div class="a" style="left:1012px;top:309px;width:467px;height:500px;background:#f0f0f0;border:1px solid #1a1a1a;"></div>
<div class="a" style="left:1013px;top:310px;width:465px;height:22px;background:#4d4dca;"></div>
<div class="t" style="left:1018.60px;top:316.59px;font-size:12.3px;color:#ffffff;transform:scaleX(0.865);transform-origin:0 0;">Ping (Running)</div>
<div class="a" style="left:1442px;top:314px;width:15px;height:15px;background:#f0f0f0;border:1px solid #303030;"></div>
<svg class="a" style="left:1445px;top:317px" width="9" height="9" viewBox="0 0 9 9"><rect x=".5" y=".5" width="8" height="8" fill="none" stroke="#222" stroke-width="1"/><rect x=".5" y=".5" width="8" height="2" fill="#222"/></svg>
<div class="a" style="left:1459px;top:314px;width:15px;height:15px;background:#f0f0f0;border:1px solid #303030;"></div>
<svg class="a" style="left:1461px;top:316px" width="11" height="11" viewBox="0 0 11 11"><path d="M2 2L9 9M9 2L2 9" stroke="#222" stroke-width="1.8"/></svg>
<div class="a" style="left:1017px;top:334px;width:53px;height:25px;background:#f0f0f0;border-top:1px solid #fff;border-left:1px solid #fff;border-right:1px solid #a0a0a0"></div>
<div class="t" style="left:1024.40px;top:340.59px;font-size:12.3px;color:#000;transform:scaleX(0.865);transform-origin:0 0;">General</div>
<div class="a" style="left:1070px;top:337px;width:62px;height:22px;background:#d9d9d9;border-right:1px solid #b8b8b8"></div>
<div class="t" style="left:1076.20px;top:342.59px;font-size:12.3px;color:#000;transform:scaleX(0.865);transform-origin:0 0;">Advanced</div>
<div class="a" style="left:1069px;top:359px;width:313px;height:1px;background:#ffffff;"></div>
<div class="a" style="left:1016px;top:359px;width:1px;height:148px;background:#ffffff;"></div>
<div class="a" style="left:1381px;top:359px;width:1px;height:148px;background:#a0a0a0;"></div>
<div class="a" style="left:1016px;top:506px;width:366px;height:1px;background:#a0a0a0;"></div>
<div class="t" style="left:990.50px;width:100px;text-align:right;top:369.59px;font-size:12.3px;color:#000;transform:scaleX(0.865);transform-origin:100% 0;">Ping To:</div>
<div class="a" style="left:1095px;top:367px;width:279px;height:17px;background:#fff;border:1px solid #a8a8a8;"></div>
<div class="t" style="left:1097.50px;top:369.59px;font-size:12.3px;color:#000;transform:scaleX(0.865);transform-origin:0 0;">www.munidepocollay.gob.pe</div>
<div class="t" style="left:990.50px;width:100px;text-align:right;top:392.59px;font-size:12.3px;color:#000;transform:scaleX(0.865);transform-origin:100% 0;">Interface:</div>
<div class="a" style="left:1095px;top:390px;width:243px;height:17px;background:#fff;border:1px solid #a8a8a8;"></div>
<div class="t" style="left:1097.50px;top:392.59px;font-size:12.3px;color:#000;transform:scaleX(0.865);transform-origin:0 0;">ether3</div>
<div class="a" style="left:1339px;top:390px;width:17px;height:17px;background:#f0f0f0;border:1px solid #c0c0c0;"></div>
<svg class="a" style="left:1342px;top:393px" width="11" height="11" viewBox="0 0 11 11"><path d="M2 1.5h7" stroke="#000" stroke-width="1"/><path d="M4 3h3v3h2.5L5.5 9.5 1.5 6H4z" fill="#000"/></svg>
<svg class="a" style="left:1361px;top:394px" width="11" height="7" viewBox="0 0 11 7"><path d="M5.5 .5L10.5 6H.5Z" fill="#000"/></svg>
<div class="a" style="left:1095px;top:416px;width:12px;height:12px;background:#fff;border:1px solid #a8a8a8;"></div>
<div class="t" style="left:1110.50px;top:415.59px;font-size:12.3px;color:#000;transform:scaleX(0.865);transform-origin:0 0;">ARP Ping</div>
<div class="t" style="left:990.50px;width:100px;text-align:right;top:438.59px;font-size:12.3px;color:#000;transform:scaleX(0.865);transform-origin:100% 0;">Packet Count:</div>
<div class="a" style="left:1095px;top:436px;width:261px;height:17px;background:#f0f0f0;border:1px solid #a8a8a8;"></div>
<svg class="a" style="left:1361px;top:441px" width="11" height="7" viewBox="0 0 11 7"><path d="M.5 .5H10.5L5.5 6Z" fill="#000"/></svg>
<div class="t" style="left:990.50px;width:100px;text-align:right;top:461.59px;font-size:12.3px;color:#000;transform:scaleX(0.865);transform-origin:100% 0;">Timeout:</div>
<div class="a" style="left:1095px;top:459px;width:261px;height:17px;background:#fff;border:1px solid #a8a8a8;"></div>
<div class="t" style="left:1097.50px;top:461.59px;font-size:12.3px;color:#000;transform:scaleX(0.865);transform-origin:0 0;">1000</div>
<div class="t" style="left:1359.00px;top:461.59px;font-size:12.3px;color:#000;transform:scaleX(0.865);transform-origin:0 0;">ms</div>
<div class="a" style="left:1387px;top:338px;width:82px;height:23px;background:#f0f0f0;border:1px solid #a0a0a0;"></div>
<div class="t" style="left:1383.00px;width:90px;text-align:center;top:343.79px;font-size:12.3px;color:#808890;transform:scaleX(0.865);transform-origin:50% 0;">Start</div>
<div class="a" style="left:1387px;top:364px;width:82px;height:23px;background:#f0f0f0;border:1px solid #101010;box-shadow:inset 0 0 0 1px rgba(0,0,0,0.22)"></div>
<div class="t" style="left:1383.00px;width:90px;text-align:center;top:369.59px;font-size:12.3px;color:#000;transform:scaleX(0.865);transform-origin:50% 0;">Stop</div>
<div class="a" style="left:1387px;top:390px;width:82px;height:23px;background:#f0f0f0;border:1px solid #a0a0a0;"></div>
<div class="t" style="left:1383.00px;width:90px;text-align:center;top:395.59px;font-size:12.3px;color:#000;transform:scaleX(0.865);transform-origin:50% 0;">Close</div>
<div class="a" style="left:1387px;top:416px;width:82px;height:23px;background:#f0f0f0;border:1px solid #a0a0a0;"></div>
<div class="t" style="left:1383.00px;width:90px;text-align:center;top:421.59px;font-size:12.3px;color:#000;transform:scaleX(0.865);transform-origin:50% 0;">New Window</div>
<div class="a" style="left:1015px;top:513px;width:460px;height:274px;background:#fff;border:1px solid #a0a0a0;"></div>
<div class="a" style="left:1016px;top:514px;width:458px;height:15px;background:#f0f0f0;border-top:1px solid #fff;border-left:1px solid #fff"></div>
<div class="a" style="left:1016px;top:529px;width:458px;height:1px;background:#a0a0a0;"></div>
<div class="a" style="left:1060px;top:514px;width:1px;height:15px;background:#b0b0b0;"></div>
<div class="a" style="left:1061px;top:514px;width:1px;height:15px;background:#ffffff;"></div>
<div class="a" style="left:1210px;top:514px;width:1px;height:15px;background:#b0b0b0;"></div>
<div class="a" style="left:1211px;top:514px;width:1px;height:15px;background:#ffffff;"></div>
<div class="a" style="left:1260px;top:514px;width:1px;height:15px;background:#b0b0b0;"></div>
<div class="a" style="left:1261px;top:514px;width:1px;height:15px;background:#ffffff;"></div>
<div class="a" style="left:1320px;top:514px;width:1px;height:15px;background:#b0b0b0;"></div>
<div class="a" style="left:1321px;top:514px;width:1px;height:15px;background:#ffffff;"></div>
<div class="a" style="left:1355px;top:514px;width:1px;height:15px;background:#b0b0b0;"></div>
<div class="a" style="left:1356px;top:514px;width:1px;height:15px;background:#ffffff;"></div>
<div class="a" style="left:1455px;top:514px;width:1px;height:15px;background:#b0b0b0;"></div>
<div class="a" style="left:1456px;top:514px;width:1px;height:15px;background:#ffffff;"></div>
<div class="a" style="left:1459px;top:514px;width:1px;height:15px;background:#b0b0b0;"></div>
<div class="a" style="left:1460px;top:514px;width:1px;height:15px;background:#ffffff;"></div>
<svg class="a" style="left:1462px;top:518px" width="10" height="6" viewBox="0 0 10 6"><path d="M0 .5h10L5 5.5Z" fill="#000"/></svg>
<div class="t" style="left:1018.00px;top:515.59px;font-size:12.3px;color:#000;transform:scaleX(0.865);transform-origin:0 0;">Seq #</div>
<svg class="a" style="left:1048px;top:516px" width="8" height="6" viewBox="0 0 8 6"><path d="M4 .5L7.5 5.5H.5Z" fill="#fff" stroke="#aaa" stroke-width=".8"/></svg>
<div class="t" style="left:1063.00px;top:515.59px;font-size:12.3px;color:#000;transform:scaleX(0.865);transform-origin:0 0;">Host</div>
<div class="t" style="left:1213.00px;top:515.59px;font-size:12.3px;color:#000;transform:scaleX(0.865);transform-origin:0 0;">Time</div>
<div class="t" style="left:1263.00px;top:515.59px;font-size:12.3px;color:#000;transform:scaleX(0.865);transform-origin:0 0;">Reply Size</div>
<div class="t" style="left:1323.00px;top:515.59px;font-size:12.3px;color:#000;transform:scaleX(0.865);transform-origin:0 0;">TTL</div>
<div class="t" style="left:1358.00px;top:515.59px;font-size:12.3px;color:#000;transform:scaleX(0.865);transform-origin:0 0;">Status</div>
<div class="a" style="left:1016px;top:544px;width:443px;height:1px;background:#e3e3e3;"></div>
<div class="t" style="left:1018.00px;width:40px;text-align:right;top:530.59px;font-size:12.3px;color:#000;transform:scaleX(0.865);transform-origin:100% 0;">0</div>
<div class="t" style="left:1062.50px;top:530.59px;font-size:12.3px;color:#000;transform:scaleX(0.865);transform-origin:0 0;">66.225.221.135</div>
<div class="t" style="left:1212.50px;top:530.59px;font-size:12.3px;color:#000;transform:scaleX(0.865);transform-origin:0 0;">timeout</div>
<div class="t" style="left:1278.00px;width:40px;text-align:right;top:530.59px;font-size:12.3px;color:#000;transform:scaleX(0.865);transform-origin:100% 0;"></div>
<div class="t" style="left:1323.00px;width:30px;text-align:right;top:530.59px;font-size:12.3px;color:#000;transform:scaleX(0.865);transform-origin:100% 0;"></div>
<div class="t" style="left:1357.50px;top:530.59px;font-size:12.3px;color:#000;transform:scaleX(0.865);transform-origin:0 0;">timeout</div>
<div class="a" style="left:1016px;top:559px;width:443px;height:1px;background:#e3e3e3;"></div>
<div class="t" style="left:1018.00px;width:40px;text-align:right;top:545.59px;font-size:12.3px;color:#000;transform:scaleX(0.865);transform-origin:100% 0;">1</div>
<div class="t" style="left:1062.50px;top:545.59px;font-size:12.3px;color:#000;transform:scaleX(0.865);transform-origin:0 0;">66.225.221.135</div>
<div class="t" style="left:1212.50px;top:545.59px;font-size:12.3px;color:#000;transform:scaleX(0.865);transform-origin:0 0;">timeout</div>
<div class="t" style="left:1278.00px;width:40px;text-align:right;top:545.59px;font-size:12.3px;color:#000;transform:scaleX(0.865);transform-origin:100% 0;"></div>
<div class="t" style="left:1323.00px;width:30px;text-align:right;top:545.59px;font-size:12.3px;color:#000;transform:scaleX(0.865);transform-origin:100% 0;"></div>
<div class="t" style="left:1357.50px;top:545.59px;font-size:12.3px;color:#000;transform:scaleX(0.865);transform-origin:0 0;">timeout</div>
<div class="a" style="left:1016px;top:574px;width:443px;height:1px;background:#e3e3e3;"></div>
<div class="t" style="left:1018.00px;width:40px;text-align:right;top:560.59px;font-size:12.3px;color:#000;transform:scaleX(0.865);transform-origin:100% 0;">2</div>
<div class="t" style="left:1062.50px;top:560.59px;font-size:12.3px;color:#000;transform:scaleX(0.865);transform-origin:0 0;">66.225.221.135</div>
<div class="t" style="left:1212.50px;top:560.59px;font-size:12.3px;color:#000;transform:scaleX(0.865);transform-origin:0 0;">timeout</div>
<div class="t" style="left:1278.00px;width:40px;text-align:right;top:560.59px;font-size:12.3px;color:#000;transform:scaleX(0.865);transform-origin:100% 0;"></div>
<div class="t" style="left:1323.00px;width:30px;text-align:right;top:560.59px;font-size:12.3px;color:#000;transform:scaleX(0.865);transform-origin:100% 0;"></div>
<div class="t" style="left:1357.50px;top:560.59px;font-size:12.3px;color:#000;transform:scaleX(0.865);transform-origin:0 0;">timeout</div>
<div class="a" style="left:1016px;top:589px;width:443px;height:1px;background:#e3e3e3;"></div>
<div class="t" style="left:1018.00px;width:40px;text-align:right;top:575.59px;font-size:12.3px;color:#000;transform:scaleX(0.865);transform-origin:100% 0;">3</div>
<div class="t" style="left:1062.50px;top:575.59px;font-size:12.3px;color:#000;transform:scaleX(0.865);transform-origin:0 0;">66.225.221.135</div>
<div class="t" style="left:1212.50px;top:575.59px;font-size:12.3px;color:#000;transform:scaleX(0.865);transform-origin:0 0;">timeout</div>
<div class="t" style="left:1278.00px;width:40px;text-align:right;top:575.59px;font-size:12.3px;color:#000;transform:scaleX(0.865);transform-origin:100% 0;"></div>
<div class="t" style="left:1323.00px;width:30px;text-align:right;top:575.59px;font-size:12.3px;color:#000;transform:scaleX(0.865);transform-origin:100% 0;"></div>
<div class="t" style="left:1357.50px;top:575.59px;font-size:12.3px;color:#000;transform:scaleX(0.865);transform-origin:0 0;">timeout</div>
<div class="a" style="left:1016px;top:604px;width:443px;height:1px;background:#e3e3e3;"></div>
<div class="t" style="left:1018.00px;width:40px;text-align:right;top:590.59px;font-size:12.3px;color:#000;transform:scaleX(0.865);transform-origin:100% 0;">4</div>
<div class="t" style="left:1062.50px;top:590.59px;font-size:12.3px;color:#000;transform:scaleX(0.865);transform-origin:0 0;">66.225.221.135</div>
<div class="t" style="left:1212.50px;top:590.59px;font-size:12.3px;color:#000;transform:scaleX(0.865);transform-origin:0 0;">timeout</div>
<div class="t" style="left:1278.00px;width:40px;text-align:right;top:590.59px;font-size:12.3px;color:#000;transform:scaleX(0.865);transform-origin:100% 0;"></div>
<div class="t" style="left:1323.00px;width:30px;text-align:right;top:590.59px;font-size:12.3px;color:#000;transform:scaleX(0.865);transform-origin:100% 0;"></div>
<div class="t" style="left:1357.50px;top:590.59px;font-size:12.3px;color:#000;transform:scaleX(0.865);transform-origin:0 0;">timeout</div>
<div class="a" style="left:1016px;top:619px;width:443px;height:1px;background:#e3e3e3;"></div>
<div class="t" style="left:1018.00px;width:40px;text-align:right;top:605.59px;font-size:12.3px;color:#000;transform:scaleX(0.865);transform-origin:100% 0;">5</div>
<div class="t" style="left:1062.50px;top:605.59px;font-size:12.3px;color:#000;transform:scaleX(0.865);transform-origin:0 0;">192.168.18.106</div>
<div class="t" style="left:1212.50px;top:605.59px;font-size:12.3px;color:#000;transform:scaleX(0.865);transform-origin:0 0;">988ms</div>
<div class="t" style="left:1278.00px;width:40px;text-align:right;top:605.59px;font-size:12.3px;color:#000;transform:scaleX(0.865);transform-origin:100% 0;">78</div>
<div class="t" style="left:1323.00px;width:30px;text-align:right;top:605.59px;font-size:12.3px;color:#000;transform:scaleX(0.865);transform-origin:100% 0;">64</div>
<div class="t" style="left:1357.50px;top:605.59px;font-size:12.3px;color:#000;transform:scaleX(0.865);transform-origin:0 0;">host unreachable</div>
<div class="a" style="left:1016px;top:634px;width:443px;height:1px;background:#e3e3e3;"></div>
<div class="t" style="left:1018.00px;width:40px;text-align:right;top:620.59px;font-size:12.3px;color:#000;transform:scaleX(0.865);transform-origin:100% 0;">6</div>
<div class="t" style="left:1062.50px;top:620.59px;font-size:12.3px;color:#000;transform:scaleX(0.865);transform-origin:0 0;">66.225.221.135</div>
<div class="t" style="left:1212.50px;top:620.59px;font-size:12.3px;color:#000;transform:scaleX(0.865);transform-origin:0 0;">timeout</div>
<div class="t" style="left:1278.00px;width:40px;text-align:right;top:620.59px;font-size:12.3px;color:#000;transform:scaleX(0.865);transform-origin:100% 0;"></div>
<div class="t" style="left:1323.00px;width:30px;text-align:right;top:620.59px;font-size:12.3px;color:#000;transform:scaleX(0.865);transform-origin:100% 0;"></div>
<div class="t" style="left:1357.50px;top:620.59px;font-size:12.3px;color:#000;transform:scaleX(0.865);transform-origin:0 0;">timeout</div>
<div class="a" style="left:1016px;top:649px;width:443px;height:1px;background:#e3e3e3;"></div>
<div class="t" style="left:1018.00px;width:40px;text-align:right;top:635.59px;font-size:12.3px;color:#000;transform:scaleX(0.865);transform-origin:100% 0;">7</div>
<div class="t" style="left:1062.50px;top:635.59px;font-size:12.3px;color:#000;transform:scaleX(0.865);transform-origin:0 0;">66.225.221.135</div>
<div class="t" style="left:1212.50px;top:635.59px;font-size:12.3px;color:#000;transform:scaleX(0.865);transform-origin:0 0;">timeout</div>
<div class="t" style="left:1278.00px;width:40px;text-align:right;top:635.59px;font-size:12.3px;color:#000;transform:scaleX(0.865);transform-origin:100% 0;"></div>
<div class="t" style="left:1323.00px;width:30px;text-align:right;top:635.59px;font-size:12.3px;color:#000;transform:scaleX(0.865);transform-origin:100% 0;"></div>
<div class="t" style="left:1357.50px;top:635.59px;font-size:12.3px;color:#000;transform:scaleX(0.865);transform-origin:0 0;">timeout</div>
<div class="a" style="left:1016px;top:664px;width:443px;height:1px;background:#e3e3e3;"></div>
<div class="t" style="left:1018.00px;width:40px;text-align:right;top:650.59px;font-size:12.3px;color:#000;transform:scaleX(0.865);transform-origin:100% 0;">8</div>
<div class="t" style="left:1062.50px;top:650.59px;font-size:12.3px;color:#000;transform:scaleX(0.865);transform-origin:0 0;">192.168.18.106</div>
<div class="t" style="left:1212.50px;top:650.59px;font-size:12.3px;color:#000;transform:scaleX(0.865);transform-origin:0 0;">988ms</div>
<div class="t" style="left:1278.00px;width:40px;text-align:right;top:650.59px;font-size:12.3px;color:#000;transform:scaleX(0.865);transform-origin:100% 0;">78</div>
<div class="t" style="left:1323.00px;width:30px;text-align:right;top:650.59px;font-size:12.3px;color:#000;transform:scaleX(0.865);transform-origin:100% 0;">64</div>
<div class="t" style="left:1357.50px;top:650.59px;font-size:12.3px;color:#000;transform:scaleX(0.865);transform-origin:0 0;">host unreachable</div>
<div class="a" style="left:1016px;top:679px;width:443px;height:1px;background:#e3e3e3;"></div>
<div class="t" style="left:1018.00px;width:40px;text-align:right;top:665.59px;font-size:12.3px;color:#000;transform:scaleX(0.865);transform-origin:100% 0;">9</div>
<div class="t" style="left:1062.50px;top:665.59px;font-size:12.3px;color:#000;transform:scaleX(0.865);transform-origin:0 0;">66.225.221.135</div>
<div class="t" style="left:1212.50px;top:665.59px;font-size:12.3px;color:#000;transform:scaleX(0.865);transform-origin:0 0;">timeout</div>
<div class="t" style="left:1278.00px;width:40px;text-align:right;top:665.59px;font-size:12.3px;color:#000;transform:scaleX(0.865);transform-origin:100% 0;"></div>
<div class="t" style="left:1323.00px;width:30px;text-align:right;top:665.59px;font-size:12.3px;color:#000;transform:scaleX(0.865);transform-origin:100% 0;"></div>
<div class="t" style="left:1357.50px;top:665.59px;font-size:12.3px;color:#000;transform:scaleX(0.865);transform-origin:0 0;">timeout</div>
<div class="a" style="left:1016px;top:694px;width:443px;height:1px;background:#e3e3e3;"></div>
<div class="t" style="left:1018.00px;width:40px;text-align:right;top:680.59px;font-size:12.3px;color:#000;transform:scaleX(0.865);transform-origin:100% 0;">10</div>
<div class="t" style="left:1062.50px;top:680.59px;font-size:12.3px;color:#000;transform:scaleX(0.865);transform-origin:0 0;">66.225.221.135</div>
<div class="t" style="left:1212.50px;top:680.59px;font-size:12.3px;color:#000;transform:scaleX(0.865);transform-origin:0 0;">timeout</div>
<div class="t" style="left:1278.00px;width:40px;text-align:right;top:680.59px;font-size:12.3px;color:#000;transform:scaleX(0.865);transform-origin:100% 0;"></div>
<div class="t" style="left:1323.00px;width:30px;text-align:right;top:680.59px;font-size:12.3px;color:#000;transform:scaleX(0.865);transform-origin:100% 0;"></div>
<div class="t" style="left:1357.50px;top:680.59px;font-size:12.3px;color:#000;transform:scaleX(0.865);transform-origin:0 0;">timeout</div>
<div class="a" style="left:1016px;top:709px;width:443px;height:1px;background:#e3e3e3;"></div>
<div class="t" style="left:1018.00px;width:40px;text-align:right;top:695.59px;font-size:12.3px;color:#000;transform:scaleX(0.865);transform-origin:100% 0;">11</div>
<div class="t" style="left:1062.50px;top:695.59px;font-size:12.3px;color:#000;transform:scaleX(0.865);transform-origin:0 0;">66.225.221.135</div>
<div class="t" style="left:1212.50px;top:695.59px;font-size:12.3px;color:#000;transform:scaleX(0.865);transform-origin:0 0;">timeout</div>
<div class="t" style="left:1278.00px;width:40px;text-align:right;top:695.59px;font-size:12.3px;color:#000;transform:scaleX(0.865);transform-origin:100% 0;"></div>
<div class="t" style="left:1323.00px;width:30px;text-align:right;top:695.59px;font-size:12.3px;color:#000;transform:scaleX(0.865);transform-origin:100% 0;"></div>
<div class="t" style="left:1357.50px;top:695.59px;font-size:12.3px;color:#000;transform:scaleX(0.865);transform-origin:0 0;">timeout</div>
<div class="a" style="left:1016px;top:724px;width:443px;height:1px;background:#e3e3e3;"></div>
<div class="t" style="left:1018.00px;width:40px;text-align:right;top:710.59px;font-size:12.3px;color:#000;transform:scaleX(0.865);transform-origin:100% 0;">12</div>
<div class="t" style="left:1062.50px;top:710.59px;font-size:12.3px;color:#000;transform:scaleX(0.865);transform-origin:0 0;">66.225.221.135</div>
<div class="t" style="left:1212.50px;top:710.59px;font-size:12.3px;color:#000;transform:scaleX(0.865);transform-origin:0 0;">timeout</div>
<div class="t" style="left:1278.00px;width:40px;text-align:right;top:710.59px;font-size:12.3px;color:#000;transform:scaleX(0.865);transform-origin:100% 0;"></div>
<div class="t" style="left:1323.00px;width:30px;text-align:right;top:710.59px;font-size:12.3px;color:#000;transform:scaleX(0.865);transform-origin:100% 0;"></div>
<div class="t" style="left:1357.50px;top:710.59px;font-size:12.3px;color:#000;transform:scaleX(0.865);transform-origin:0 0;">timeout</div>
<div class="a" style="left:1016px;top:739px;width:443px;height:1px;background:#e3e3e3;"></div>
<div class="t" style="left:1018.00px;width:40px;text-align:right;top:725.59px;font-size:12.3px;color:#000;transform:scaleX(0.865);transform-origin:100% 0;">13</div>
<div class="t" style="left:1062.50px;top:725.59px;font-size:12.3px;color:#000;transform:scaleX(0.865);transform-origin:0 0;">66.225.221.135</div>
<div class="t" style="left:1212.50px;top:725.59px;font-size:12.3px;color:#000;transform:scaleX(0.865);transform-origin:0 0;">timeout</div>
<div class="t" style="left:1278.00px;width:40px;text-align:right;top:725.59px;font-size:12.3px;color:#000;transform:scaleX(0.865);transform-origin:100% 0;"></div>
<div class="t" style="left:1323.00px;width:30px;text-align:right;top:725.59px;font-size:12.3px;color:#000;transform:scaleX(0.865);transform-origin:100% 0;"></div>
<div class="t" style="left:1357.50px;top:725.59px;font-size:12.3px;color:#000;transform:scaleX(0.865);transform-origin:0 0;">timeout</div>
<div class="a" style="left:1016px;top:754px;width:443px;height:1px;background:#e3e3e3;"></div>
<div class="t" style="left:1018.00px;width:40px;text-align:right;top:740.59px;font-size:12.3px;color:#000;transform:scaleX(0.865);transform-origin:100% 0;">14</div>
<div class="t" style="left:1062.50px;top:740.59px;font-size:12.3px;color:#000;transform:scaleX(0.865);transform-origin:0 0;">192.168.18.106</div>
<div class="t" style="left:1212.50px;top:740.59px;font-size:12.3px;color:#000;transform:scaleX(0.865);transform-origin:0 0;">988ms</div>
<div class="t" style="left:1278.00px;width:40px;text-align:right;top:740.59px;font-size:12.3px;color:#000;transform:scaleX(0.865);transform-origin:100% 0;">78</div>
<div class="t" style="left:1323.00px;width:30px;text-align:right;top:740.59px;font-size:12.3px;color:#000;transform:scaleX(0.865);transform-origin:100% 0;">64</div>
<div class="t" style="left:1357.50px;top:740.59px;font-size:12.3px;color:#000;transform:scaleX(0.865);transform-origin:0 0;">host unreachable</div>
<div class="a" style="left:1016px;top:769px;width:443px;height:1px;background:#e3e3e3;"></div>
<div class="t" style="left:1018.00px;width:40px;text-align:right;top:755.59px;font-size:12.3px;color:#000;transform:scaleX(0.865);transform-origin:100% 0;">15</div>
<div class="t" style="left:1062.50px;top:755.59px;font-size:12.3px;color:#000;transform:scaleX(0.865);transform-origin:0 0;">66.225.221.135</div>
<div class="t" style="left:1212.50px;top:755.59px;font-size:12.3px;color:#000;transform:scaleX(0.865);transform-origin:0 0;">timeout</div>
<div class="t" style="left:1278.00px;width:40px;text-align:right;top:755.59px;font-size:12.3px;color:#000;transform:scaleX(0.865);transform-origin:100% 0;"></div>
<div class="t" style="left:1323.00px;width:30px;text-align:right;top:755.59px;font-size:12.3px;color:#000;transform:scaleX(0.865);transform-origin:100% 0;"></div>
<div class="t" style="left:1357.50px;top:755.59px;font-size:12.3px;color:#000;transform:scaleX(0.865);transform-origin:0 0;">timeout</div>
<div class="t" style="left:1018.00px;width:40px;text-align:right;top:770.59px;font-size:12.3px;color:#000;transform:scaleX(0.865);transform-origin:100% 0;">16</div>
<div class="t" style="left:1062.50px;top:770.59px;font-size:12.3px;color:#000;transform:scaleX(0.865);transform-origin:0 0;">66.225.221.135</div>
<div class="t" style="left:1212.50px;top:770.59px;font-size:12.3px;color:#000;transform:scaleX(0.865);transform-origin:0 0;">timeout</div>
<div class="t" style="left:1278.00px;width:40px;text-align:right;top:770.59px;font-size:12.3px;color:#000;transform:scaleX(0.865);transform-origin:100% 0;"></div>
<div class="t" style="left:1323.00px;width:30px;text-align:right;top:770.59px;font-size:12.3px;color:#000;transform:scaleX(0.865);transform-origin:100% 0;"></div>
<div class="t" style="left:1357.50px;top:770.59px;font-size:12.3px;color:#000;transform:scaleX(0.865);transform-origin:0 0;">timeout</div>
<div class="a" style="left:1060px;top:530px;width:1px;height:255px;background:#e3e3e3;"></div>
<div class="a" style="left:1210px;top:530px;width:1px;height:255px;background:#e3e3e3;"></div>
<div class="a" style="left:1260px;top:530px;width:1px;height:255px;background:#e3e3e3;"></div>
<div class="a" style="left:1320px;top:530px;width:1px;height:255px;background:#e3e3e3;"></div>
<div class="a" style="left:1355px;top:530px;width:1px;height:255px;background:#e3e3e3;"></div>
<div class="a" style="left:1455px;top:530px;width:1px;height:255px;background:#e3e3e3;"></div>
<div class="a" style="left:1459px;top:530px;width:15px;height:255px;background:#f0f0f0;border-left:1px solid #d8d8d8"></div>
<div class="a" style="left:1460px;top:531px;width:14px;height:14px;background:#f0f0f0;border-bottom:1px solid #d0d0d0"></div>
<svg class="a" style="left:1462px;top:533px" width="10" height="9" viewBox="0 0 10 9"><path d="M5 .5L9.5 5H7v3H3V5H.5Z" fill="#000"/></svg>
<div class="a" style="left:1460px;top:692px;width:14px;height:79px;background:#cdcdcd;"></div>
<div class="a" style="left:1460px;top:771px;width:14px;height:14px;background:#f0f0f0;"></div>
<svg class="a" style="left:1462px;top:773px" width="10" height="9" viewBox="0 0 10 9"><path d="M5 8.5L9.5 4H7V1H3V4H.5Z" fill="#000"/></svg>
<div class="a" style="left:1015px;top:787px;width:460px;height:19px;background:#f0f0f0;"></div>
<div class="a" style="left:1071px;top:787px;width:1px;height:18px;background:#b8b8b8;"></div>
<div class="a" style="left:1072px;top:787px;width:1px;height:18px;background:#ffffff;"></div>
<div class="a" style="left:1176px;top:787px;width:1px;height:18px;background:#b8b8b8;"></div>
<div class="a" style="left:1177px;top:787px;width:1px;height:18px;background:#ffffff;"></div>
<div class="a" style="left:1273px;top:787px;width:1px;height:18px;background:#b8b8b8;"></div>
<div class="a" style="left:1274px;top:787px;width:1px;height:18px;background:#ffffff;"></div>
<div class="a" style="left:1339px;top:787px;width:1px;height:18px;background:#b8b8b8;"></div>
<div class="a" style="left:1340px;top:787px;width:1px;height:18px;background:#ffffff;"></div>
<div class="a" style="left:1405px;top:787px;width:1px;height:18px;background:#b8b8b8;"></div>
<div class="a" style="left:1406px;top:787px;width:1px;height:18px;background:#ffffff;"></div>
<div class="t" style="left:1018.50px;top:790.09px;font-size:12.3px;color:#000;transform:scaleX(0.865);transform-origin:0 0;">26 items</div>
<div class="t" style="left:1074.50px;top:790.09px;font-size:12.3px;color:#000;transform:scaleX(0.865);transform-origin:0 0;">0 of 26 packets re...</div>
<div class="t" style="left:1180.00px;top:790.09px;font-size:12.3px;color:#000;transform:scaleX(0.865);transform-origin:0 0;">100% packet loss</div>
<div class="a" style="left:159px;top:950px;width:1602px;height:49px;background:#d7e1f1;background:linear-gradient(90deg,#d8e2f1,#d5dff0 50%,#d7e1f1);border-top:1px solid #aab6c8"></div>
<svg class="a" style="left:178px;top:960px" width="26" height="24" viewBox="0 0 26 24"><path d="M13 1 L15 7 L10 9 Z" fill="#f0b030"/><path d="M2 7 L10 9 L8 12Z" fill="#f09020"/><path d="M4 21c-3 0-4-2-4-4s2-4 4-4c1-3 4-5 7-5 3.5 0 6 2 6.5 5 2 0 5 1.5 5 4.5S20 21 18 21Z" fill="#b8d4f0" stroke="#9ab8e0" stroke-width=".6"/></svg>
<div class="t" style="left:210.60px;top:960.43px;font-size:11.3px;color:#1a1a1a;">22°C</div>
<div class="t" style="left:210.60px;top:976.18px;font-size:11.6px;color:#505050;letter-spacing:0.25px;">Mayorm. nublado</div>
<svg class="a" style="left:551px;top:963px" width="23" height="23" viewBox="0 0 23 23"><defs><linearGradient id="wl551" x1="0" y1="0" x2="1" y2="1"><stop offset="0" stop-color="#38b6f8"/><stop offset="1" stop-color="#1a78d8"/></linearGradient></defs><rect x="0" y="0" width="11.0" height="11.0" fill="url(#wl551)"/><rect x="12.0" y="0" width="11.0" height="11.0" fill="url(#wl551)"/><rect x="0" y="12.0" width="11.0" height="11.0" fill="url(#wl551)"/><rect x="12.0" y="12.0" width="11.0" height="11.0" fill="url(#wl551)"/></svg>
<div class="a" style="left:588px;top:958.5px;width:218px;height:31px;background:#f3f6fb;border:1px solid #c4ccd8;border-radius:15.5px"></div>
<svg class="a" style="left:598px;top:965px" width="17" height="17" viewBox="0 0 17 17"><circle cx="7" cy="7" r="5.3" fill="none" stroke="#222" stroke-width="1.5"/><path d="M11 11 L15.5 15.5" stroke="#222" stroke-width="1.6"/></svg>
<div class="t" style="left:624.00px;top:968.16px;font-size:12.8px;color:#505050;">Buscar</div>
<svg class="a" style="left:753px;top:961px" width="51" height="25" viewBox="0 0 51 25"><defs><clipPath id="cla"><path d="M4.08 12.5 C2.5500000000000003 2.5 15.299999999999999 1.25 25.5 2.0 C38.25 1.25 49.47 3.75 49.47 12.5 C51 21.25 38.25 24.5 25.5 23.0 C15.299999999999999 24.5 2.5500000000000003 22.5 4.08 12.5Z"/></clipPath><linearGradient id="ska" x1="0" y1="0" x2="0" y2="1"><stop offset="0" stop-color="#b8b8e8"/><stop offset="1" stop-color="#f0b088"/></linearGradient><linearGradient id="wta" x1="0" y1="0" x2="1" y2="0"><stop offset="0" stop-color="#7888c8"/><stop offset=".4" stop-color="#e0c8a8"/><stop offset=".6" stop-color="#6890c8"/><stop offset="1" stop-color="#806878"/></linearGradient></defs><g clip-path="url(#cla)"><rect width="51" height="11.25" fill="url(#ska)"/><circle cx="14.280000000000001" cy="9.5" r="2.25" fill="#f8e090"/><path d="M28.05 10.5 L30.599999999999998 6.25 L34.68 3.75 L38.76 5.5 L40.800000000000004 8.75 L48.449999999999996 10.0 V11.25 H28.05Z" fill="#c87a40"/><rect y="10.0" width="51" height="4.5" fill="url(#wta)"/><rect y="13.750000000000002" width="51" height="11.25" fill="#a0604c"/><path d="M0.5 15.5 L4.1 14.0 L7.7 15.5 L4.1 17.0Z" fill="#d8a090"/><path d="M9.2 15.5 L12.8 14.0 L16.3 15.5 L12.8 17.0Z" fill="#d8a090"/><path d="M17.9 15.5 L21.4 14.0 L25.0 15.5 L21.4 17.0Z" fill="#d8a090"/><path d="M26.5 15.5 L30.1 14.0 L33.7 15.5 L30.1 17.0Z" fill="#d8a090"/><path d="M35.2 15.5 L38.8 14.0 L42.3 15.5 L38.8 17.0Z" fill="#d8a090"/><path d="M43.9 15.5 L47.4 14.0 L51.0 15.5 L47.4 17.0Z" fill="#d8a090"/><path d="M4.8 19.2 L8.4 17.8 L12.0 19.2 L8.4 20.8Z" fill="#d8a090"/><path d="M13.5 19.2 L17.1 17.8 L20.7 19.2 L17.1 20.8Z" fill="#d8a090"/><path d="M22.2 19.2 L25.8 17.8 L29.3 19.2 L25.8 20.8Z" fill="#d8a090"/><path d="M30.9 19.2 L34.4 17.8 L38.0 19.2 L34.4 20.8Z" fill="#d8a090"/><path d="M39.5 19.2 L43.1 17.8 L46.7 19.2 L43.1 20.8Z" fill="#d8a090"/><path d="M48.2 19.2 L51.8 17.8 L55.3 19.2 L51.8 20.8Z" fill="#d8a090"/><path d="M0.5 23.0 L4.1 21.5 L7.7 23.0 L4.1 24.5Z" fill="#d8a090"/><path d="M9.2 23.0 L12.8 21.5 L16.3 23.0 L12.8 24.5Z" fill="#d8a090"/><path d="M17.9 23.0 L21.4 21.5 L25.0 23.0 L21.4 24.5Z" fill="#d8a090"/><path d="M26.5 23.0 L30.1 21.5 L33.7 23.0 L30.1 24.5Z" fill="#d8a090"/><path d="M35.2 23.0 L38.8 21.5 L42.3 23.0 L38.8 24.5Z" fill="#d8a090"/><path d="M43.9 23.0 L47.4 21.5 L51.0 23.0 L47.4 24.5Z" fill="#d8a090"/></g></svg>
<div class="a" style="left:825px;top:962px;width:17px;height:16px;background:#f4f4f4;background:linear-gradient(135deg,#fff,#ddd)"></div>
<div class="a" style="left:819px;top:969px;width:18px;height:16px;background:#222;border-radius:1px"></div>
<div class="a" style="left:825px;top:969px;width:12px;height:10px;background:#bbb;background:linear-gradient(135deg,#ccc,#999)"></div>
<svg class="a" style="left:862px;top:962px" width="26" height="23" viewBox="0 0 26 23"><path d="M0 2a1 1 0 0 1 1-1h8l2 2H0z" fill="#e0a018"/><rect x="0" y="3" width="26" height="20" rx="1" fill="#f8c840"/><rect x="6" y="14" width="14" height="8" rx="1" fill="#1a78d8"/><rect x="8" y="15.5" width="10" height="1" fill="#5aaaf0"/></svg>
<div class="a" style="left:871.5px;top:990px;width:7px;height:3px;background:#707070;border-radius:2px"></div>
<svg class="a" style="left:907px;top:962px" width="24" height="24" viewBox="0 0 24 24"><defs><linearGradient id="eg" x1="0" y1="0" x2="1" y2="0"><stop offset="0" stop-color="#28b0f0"/><stop offset=".5" stop-color="#2ec4c8"/><stop offset="1" stop-color="#5cdc5c"/></linearGradient><linearGradient id="eg2" x1="0" y1="0" x2="1" y2="1"><stop offset="0" stop-color="#1a88e0"/><stop offset="1" stop-color="#0a4a98"/></linearGradient></defs><path d="M1.5 11 C2.5 4.5 7.5 0.8 12.5 0.8 C18.5 0.8 23.2 5 23.2 10.5 C23.2 14 20.8 16.3 17.5 16.3 C15 16.3 13.6 14.8 13.6 12.8 C13.6 10.5 11.8 8.6 9 8.6 C6 8.6 3.2 10 1.5 12.5 Z" fill="url(#eg)"/><path d="M1.5 12.5 C3.2 10 6 8.6 9 8.6 C11.5 8.6 13.2 10 13.4 11 C11.2 11 9.6 12.8 9.6 15.2 C9.6 19 13.5 21.2 17.2 20.8 C18.6 20.6 19.8 20.2 20.8 19.6 C18.6 22.2 15.5 23.4 12 23.4 C6 23.4 1.2 18.8 1.2 13.2 Z" fill="url(#eg2)"/></svg>
<div class="a" style="left:915.5px;top:990px;width:7px;height:3px;background:#707070;border-radius:2px"></div>
<svg class="a" style="left:951px;top:962px" width="24" height="24" viewBox="0 0 24 24"><circle cx="12" cy="12" r="11" fill="#f08020"/><path d="M12 1a11 11 0 0 1 11 11h-6z" fill="#8050e8"/><path d="M23 12a11 11 0 0 1-11 11l3-7z" fill="#f0c030"/><path d="M12 5 L18 8 C18 14 15 18 12 19 C9 18 6 14 6 8Z" fill="#fff"/><circle cx="12" cy="11" r="1.6" fill="#222"/><rect x="11.3" y="11" width="1.4" height="4" fill="#222"/></svg>
<svg class="a" style="left:995px;top:962px" width="24" height="24" viewBox="0 0 24 24"><circle cx="12" cy="12" r="11.5" fill="#e8453c"/><path d="M12 12 L1.5 7 A11.5 11.5 0 0 0 9 23.3Z" fill="#30a850"/><path d="M12 12 L9 23.3 A11.5 11.5 0 0 0 22.5 8Z" fill="#f8c020"/><path d="M12 12 L22.5 8 A11.5 11.5 0 0 0 1.5 7Z" fill="#e8453c"/><circle cx="12" cy="12" r="5.3" fill="#fff"/><circle cx="12" cy="12" r="4.2" fill="#3a80f0"/></svg>
<div class="a" style="left:1003.5px;top:990px;width:7px;height:3px;background:#707070;border-radius:2px"></div>
<svg class="a" style="left:1039px;top:963px" width="24" height="22" viewBox="0 0 24 22"><rect x="0" y="1" width="24" height="20" rx="2" fill="#2c2c2c"/><rect x="0" y="1" width="24" height="3" fill="#555"/><path d="M4 8l5 3.5L4 15" stroke="#ddd" stroke-width="1.8" fill="none"/><path d="M11 16h7" stroke="#ddd" stroke-width="1.8"/></svg>
<div class="a" style="left:1047.5px;top:990px;width:7px;height:3px;background:#707070;border-radius:2px"></div>
<svg class="a" style="left:1083px;top:961px" width="24" height="24" viewBox="0 0 24 24"><defs><linearGradient id="elga" x1="0" y1="0" x2="0" y2="1"><stop offset="0" stop-color="#50b0f8"/><stop offset="1" stop-color="#2a80e0"/></linearGradient></defs><path d="M3.5 11 C3.5 5 7.5 2 12.5 2 C18.5 2 23.2 6 23.2 12 C23.2 16.5 21.5 19 20 20 V22.5 H16.8 V20.5 H12.5 V22.5 H9.5 V19.8 C8.6 19 8 18 7.8 17 C7.2 19 6.2 21 4.6 21.3 C3.6 21.4 3.2 20.6 3.8 19.8 C4.8 18.5 4.6 16.5 4.2 15 C3.8 13.8 3.5 12.5 3.5 11Z" fill="url(#elga)"/><path d="M8.5 6.5 C11.5 6 13.5 8.5 13 12" stroke="#2a78d0" stroke-width="1" fill="none" opacity=".6"/><path d="M5.8 14.8 L6.8 16" stroke="#fff" stroke-width="1.1"/></svg>
<div class="a" style="left:1091.5px;top:990px;width:7px;height:3px;background:#707070;border-radius:2px"></div>
<svg class="a" style="left:1127px;top:963px" width="24" height="20" viewBox="0 0 24 20"><rect x="0.5" y="0.5" width="23" height="18" fill="#70c0f0" stroke="#3a90d8"/><rect x="2" y="2" width="20" height="15" fill="#e8f4fc"/><path d="M5 10a4 4 0 1 1 4 4V10z" fill="#2a90e0"/><path d="M9 10V6a4 4 0 0 1 4 4z" fill="#f08030"/><rect x="3" y="15" width="18" height="1.5" fill="#f0a030"/><path d="M16 5h4M16 8h4M16 11h4" stroke="#2a70c0" stroke-width="1"/></svg>
<div class="a" style="left:1135.5px;top:990px;width:7px;height:3px;background:#707070;border-radius:2px"></div>
<svg class="a" style="left:1171px;top:962px" width="25" height="25" viewBox="0 0 25 25"><rect x="1" y="1" width="14" height="14" rx="1" fill="#f4f4f4"/><path d="M2 2h4M8 2h4M2 2v4M2 8v4" stroke="#e03030" stroke-width="2.2"/><path d="M6 6h10v10" stroke="#888" stroke-width="2" fill="none"/><circle cx="21" cy="13" r="2.5" fill="#fff" stroke="#3a9ae8" stroke-width="1.3"/><circle cx="12" cy="21" r="2.5" fill="#fff" stroke="#3a9ae8" stroke-width="1.3"/></svg>
<div class="a" style="left:1179.5px;top:990px;width:7px;height:3px;background:#707070;border-radius:2px"></div>
<svg class="a" style="left:1216px;top:962px" width="24" height="24" viewBox="0 0 24 24"><path d="M1 2 L19 3 L19 15 L1 14Z" fill="#2050c0"/><path d="M2.5 3.5L17.5 4.5V13.5L2.5 12.5Z" fill="#70a0f0"/><path d="M6 16h8l1 3H5z" fill="#aaa"/><circle cx="17" cy="18" r="5.5" fill="#ddd" stroke="#888"/><path d="M14.5 18.5l2-2M19.5 17.5l-2 2" stroke="#2a9a3a" stroke-width="1.4"/></svg>
<div class="a" style="left:1224.5px;top:990px;width:7px;height:3px;background:#707070;border-radius:2px"></div>
<div class="a" style="left:1251px;top:954px;width:33px;height:40px;background:#eaa8a8;border-radius:4px;background:#eab0b0"></div>
<div class="a" style="left:1282px;top:954px;width:5px;height:40px;background:#e8c0c0;border-radius:0 4px 4px 0"></div>
<div class="a" style="left:1259px;top:962px;width:24px;height:24px;background:#ef3a3a;"></div>
<svg class="a" style="left:1261px;top:966px" width="20" height="16" viewBox="0 0 20 16"><path d="M6 2 L11 8 L6 14 L1 8Z" fill="#fff"/><path d="M11 2.5 L16.5 8 L11 13.5 L13.5 13.5 L19 8 L13.5 2.5Z" fill="#fff"/></svg>
<div class="a" style="left:1261px;top:990px;width:20px;height:3px;background:#d02828;border-radius:2px"></div>
<div class="a" style="left:1296px;top:955px;width:35px;height:38px;background:#eef2f9;border-radius:4px"></div>
<div class="a" style="left:1331px;top:955px;width:3px;height:38px;background:#e4eaf4;border-radius:0 3px 3px 0"></div>
<svg class="a" style="left:1303px;top:961px" width="25" height="25" viewBox="0 0 25 25"><defs><radialGradient id="wg2" cx="35%" cy="30%" r="75%"><stop offset="0" stop-color="#8cc0f0"/><stop offset=".55" stop-color="#2a70c8"/><stop offset="1" stop-color="#1a4a98"/></radialGradient></defs><circle cx="12.5" cy="12.5" r="12" fill="url(#wg2)"/><path d="M6 5 Q8 16 20 18" stroke="#fff" stroke-width="1.3" fill="none"/><path d="M4.5 9 Q7 19 17 21" stroke="#fff" stroke-width="1" fill="none" opacity=".7"/></svg>
<div class="a" style="left:1305px;top:990px;width:20px;height:3px;background:#1a70d0;border-radius:2px"></div>
<svg class="a" style="left:1347px;top:962px" width="25" height="24" viewBox="0 0 25 24"><path d="M12 1 L24 12 L12 23 L1 12Z" fill="#f8f4e8" stroke="#111" stroke-width="1.8"/><path d="M8 14 L18 8" stroke="#c05030" stroke-width="2"/><path d="M9 17c2-2 6-3 9-2" stroke="#c08060" stroke-width="2" fill="none"/></svg>
<div class="a" style="left:1355.5px;top:990px;width:7px;height:3px;background:#707070;border-radius:2px"></div>
<svg class="a" style="left:1484px;top:969px" width="12" height="8" viewBox="0 0 12 8"><path d="M1 7 L6 2 L11 7" stroke="#222" stroke-width="1.3" fill="none"/></svg>
<svg class="a" style="left:1514px;top:965px" width="18" height="18" viewBox="0 0 18 18"><path d="M3 7a6 6 0 0 1 11-2M15 11a6 6 0 0 1-11 2" stroke="#333" stroke-width="1.2" fill="none"/><path d="M13 2l1.5 3-3 .5M5 16l-1.5-3 3-.5" stroke="#333" stroke-width="1.2" fill="none"/><circle cx="12.5" cy="12.5" r="3.3" fill="#1a78e0"/></svg>
<svg class="a" style="left:1545px;top:965px" width="18" height="18" viewBox="0 0 18 18"><path d="M4 14c-2 0-3-1.5-3-3s1.5-3 3-3c.5-2.5 2.5-4 5-4 3 0 5 2 5.5 4.5 2 .3 3 1.5 3 3 0 1.8-1.3 2.5-3 2.5z" fill="#ccc" stroke="#444" stroke-width="1"/><path d="M2 3 L16 17" stroke="#333" stroke-width="1.2"/></svg>
<div class="t" style="left:1572.00px;width:40px;text-align:center;top:961.86px;font-size:10.8px;color:#1a1a1a;">ESP</div>
<div class="t" style="left:1572.00px;width:40px;text-align:center;top:977.86px;font-size:10.8px;color:#1a1a1a;">LAA</div>
<svg class="a" style="left:1621px;top:965px" width="18" height="18" viewBox="0 0 18 18"><rect x="1" y="3" width="11" height="9" fill="none" stroke="#333" stroke-width="1.2"/><path d="M4 15h6M7 12v3" stroke="#333" stroke-width="1.2"/><rect x="13" y="1" width="3.5" height="5" rx="1.5" fill="none" stroke="#333" stroke-width="1"/><path d="M14.8 6v10" stroke="#333" stroke-width="1.1"/></svg>
<svg class="a" style="left:1647px;top:966px" width="18" height="18" viewBox="0 0 18 18"><path d="M1 6h3l4-3v10L4 10H1z" fill="none" stroke="#333" stroke-width="1.2"/><circle cx="12" cy="12" r="4" fill="#222"/><path d="M10.3 10.3l3.4 3.4M13.7 10.3l-3.4 3.4" stroke="#fff" stroke-width="1.1"/></svg>
<div class="t" style="left:1681.00px;width:60px;text-align:right;top:960.52px;font-size:11.2px;color:#1a1a1a;letter-spacing:0.3px;">22:56</div>
<div class="t" style="left:1661.00px;width:80px;text-align:right;top:976.52px;font-size:11.2px;color:#1a1a1a;letter-spacing:0.5px;">05/02/2026</div>
<div class="a" style="left:0px;top:1032px;width:1920px;height:48px;background:#1e1b1b;background:linear-gradient(90deg,#1d1a1a,#201c1c 50%,#1e1b1b);border-top:1px solid #3c3a3a"></div>
<svg class="a" style="left:21px;top:1043px" width="20" height="25" viewBox="0 0 20 25"><path d="M1 2a1.5 1.5 0 0 1 1.5-1.5H13L19 6.5V23a1.5 1.5 0 0 1-1.5 1.5h-15A1.5 1.5 0 0 1 1 23z" fill="#2a9af0"/><path d="M13 .5V6.5H19" fill="#7cc8ff"/><path d="M4 13v3M8 11v5M12 14v2M16 12v4" stroke="#0a60c0" stroke-width="1.8"/><path d="M3 18.5h14M3 21.5h14" stroke="#e8f4ff" stroke-width="1.4"/></svg>
<div class="t" style="left:50.00px;top:1042.09px;font-size:12.3px;color:#ffffff;">Próximamente</div>
<div class="t" style="left:50.50px;top:1058.09px;font-size:12.3px;color:#c8c8c8;">Ganancias</div>
<svg class="a" style="left:660px;top:1045px" width="23" height="23" viewBox="0 0 23 23"><defs><linearGradient id="wl660" x1="0" y1="0" x2="1" y2="1"><stop offset="0" stop-color="#4cc2ff"/><stop offset="1" stop-color="#2a9af0"/></linearGradient></defs><rect x="0" y="0" width="11.0" height="11.0" fill="url(#wl660)"/><rect x="12.0" y="0" width="11.0" height="11.0" fill="url(#wl660)"/><rect x="0" y="12.0" width="11.0" height="11.0" fill="url(#wl660)"/><rect x="12.0" y="12.0" width="11.0" height="11.0" fill="url(#wl660)"/></svg>
<div class="a" style="left:697px;top:1040px;width:221px;height:32px;background:#383232;border:1px solid #4a4444;border-radius:16px;background:linear-gradient(90deg,#3a3434,#363030)"></div>
<svg class="a" style="left:708px;top:1047px" width="18" height="18" viewBox="0 0 18 18"><circle cx="7.5" cy="7.5" r="5.6" fill="none" stroke="#e8e8e8" stroke-width="1.5"/><path d="M11.5 11.5 L16 16" stroke="#e8e8e8" stroke-width="1.6"/></svg>
<div class="t" style="left:734.00px;top:1050.66px;font-size:12.8px;color:#d8d8d8;">Buscar</div>
<svg class="a" style="left:862px;top:1043px" width="52" height="25" viewBox="0 0 52 25"><defs><clipPath id="clb"><path d="M4.16 12.5 C2.6 2.5 15.6 1.25 26.0 2.0 C39.0 1.25 50.44 3.75 50.44 12.5 C52 21.25 39.0 24.5 26.0 23.0 C15.6 24.5 2.6 22.5 4.16 12.5Z"/></clipPath><linearGradient id="skb" x1="0" y1="0" x2="0" y2="1"><stop offset="0" stop-color="#b8b8e8"/><stop offset="1" stop-color="#f0b088"/></linearGradient><linearGradient id="wtb" x1="0" y1="0" x2="1" y2="0"><stop offset="0" stop-color="#7888c8"/><stop offset=".4" stop-color="#e0c8a8"/><stop offset=".6" stop-color="#6890c8"/><stop offset="1" stop-color="#806878"/></linearGradient></defs><g clip-path="url(#clb)"><rect width="52" height="11.25" fill="url(#skb)"/><circle cx="14.560000000000002" cy="9.5" r="2.25" fill="#f8e090"/><path d="M28.6 10.5 L31.2 6.25 L35.36 3.75 L39.52 5.5 L41.6 8.75 L49.4 10.0 V11.25 H28.6Z" fill="#c87a40"/><rect y="10.0" width="52" height="4.5" fill="url(#wtb)"/><rect y="13.750000000000002" width="52" height="11.25" fill="#a0604c"/><path d="M0.5 15.5 L4.2 14.0 L7.8 15.5 L4.2 17.0Z" fill="#d8a090"/><path d="M9.4 15.5 L13.0 14.0 L16.6 15.5 L13.0 17.0Z" fill="#d8a090"/><path d="M18.2 15.5 L21.8 14.0 L25.5 15.5 L21.8 17.0Z" fill="#d8a090"/><path d="M27.0 15.5 L30.7 14.0 L34.3 15.5 L30.7 17.0Z" fill="#d8a090"/><path d="M35.9 15.5 L39.5 14.0 L43.2 15.5 L39.5 17.0Z" fill="#d8a090"/><path d="M44.7 15.5 L48.4 14.0 L52.0 15.5 L48.4 17.0Z" fill="#d8a090"/><path d="M4.9 19.2 L8.6 17.8 L12.2 19.2 L8.6 20.8Z" fill="#d8a090"/><path d="M13.8 19.2 L17.4 17.8 L21.1 19.2 L17.4 20.8Z" fill="#d8a090"/><path d="M22.6 19.2 L26.3 17.8 L29.9 19.2 L26.3 20.8Z" fill="#d8a090"/><path d="M31.5 19.2 L35.1 17.8 L38.7 19.2 L35.1 20.8Z" fill="#d8a090"/><path d="M40.3 19.2 L43.9 17.8 L47.6 19.2 L43.9 20.8Z" fill="#d8a090"/><path d="M49.1 19.2 L52.8 17.8 L56.4 19.2 L52.8 20.8Z" fill="#d8a090"/><path d="M0.5 23.0 L4.2 21.5 L7.8 23.0 L4.2 24.5Z" fill="#d8a090"/><path d="M9.4 23.0 L13.0 21.5 L16.6 23.0 L13.0 24.5Z" fill="#d8a090"/><path d="M18.2 23.0 L21.8 21.5 L25.5 23.0 L21.8 24.5Z" fill="#d8a090"/><path d="M27.0 23.0 L30.7 21.5 L34.3 23.0 L30.7 24.5Z" fill="#d8a090"/><path d="M35.9 23.0 L39.5 21.5 L43.2 23.0 L39.5 24.5Z" fill="#d8a090"/><path d="M44.7 23.0 L48.4 21.5 L52.0 23.0 L48.4 24.5Z" fill="#d8a090"/></g></svg>
<div class="a" style="left:937px;top:1045px;width:16px;height:14px;background:#f0f0f0;background:linear-gradient(135deg,#fff,#ccc)"></div>
<div class="a" style="left:929px;top:1051px;width:17px;height:16px;background:#505050;background:#666"></div>
<div class="a" style="left:937px;top:1051px;width:9px;height:8px;background:#c8c8c8;"></div>
<svg class="a" style="left:973px;top:1045px" width="25" height="22" viewBox="0 0 25 22"><path d="M0 2a1 1 0 0 1 1-1h8l2 2H0z" fill="#e0a018"/><rect x="0" y="3" width="25" height="19" rx="1" fill="#f8c840"/><rect x="6" y="13" width="13" height="8" rx="1" fill="#1a78d8"/></svg>
<svg class="a" style="left:1018px;top:1043px" width="23" height="26" viewBox="0 0 23 26"><path d="M3 3 L7 1 H16 L20 3 L22 8 L20 17 L11.5 25 L3 17 L1 8Z" fill="#f0542a"/><path d="M7 9 L11.5 7 L16 9 L15 15 L11.5 19 L8 15Z" fill="#fff"/><path d="M9 11l2.5 1 2.5-1" stroke="#f0542a" stroke-width="1" fill="none"/></svg>
<div class="a" style="left:1025.0px;top:1072px;width:6px;height:3px;background:#9a9a9a;border-radius:2px"></div>
<svg class="a" style="left:1061px;top:1044px" width="25" height="25" viewBox="0 0 25 25"><defs><clipPath id="hsc"><circle cx="12.5" cy="12.5" r="11.5"/></clipPath><linearGradient id="hsw" x1="0" y1="0" x2="0" y2="1"><stop offset="0" stop-color="#ffffff"/><stop offset="1" stop-color="#c8c8c8"/></linearGradient></defs><g clip-path="url(#hsc)"><rect width="25" height="25" fill="url(#hsw)"/><rect width="25" height="8" fill="#3c9a30"/><rect y="8" width="25" height="1.5" fill="#7ac860"/></g><circle cx="12.5" cy="12.5" r="11.5" fill="none" stroke="#2a7a20" stroke-width=".8"/><text x="12.5" y="17" font-size="11.5" font-weight="bold" text-anchor="middle" font-family="Liberation Sans" fill="#111" letter-spacing="-0.5">HS</text></svg>
<div class="a" style="left:1070.0px;top:1072px;width:6px;height:3px;background:#9a9a9a;border-radius:2px"></div>
<svg class="a" style="left:1105px;top:1044px" width="24" height="24" viewBox="0 0 24 24"><defs><linearGradient id="elgb" x1="0" y1="0" x2="0" y2="1"><stop offset="0" stop-color="#50b0f8"/><stop offset="1" stop-color="#2a80e0"/></linearGradient></defs><path d="M3.5 11 C3.5 5 7.5 2 12.5 2 C18.5 2 23.2 6 23.2 12 C23.2 16.5 21.5 19 20 20 V22.5 H16.8 V20.5 H12.5 V22.5 H9.5 V19.8 C8.6 19 8 18 7.8 17 C7.2 19 6.2 21 4.6 21.3 C3.6 21.4 3.2 20.6 3.8 19.8 C4.8 18.5 4.6 16.5 4.2 15 C3.8 13.8 3.5 12.5 3.5 11Z" fill="url(#elgb)"/><path d="M8.5 6.5 C11.5 6 13.5 8.5 13 12" stroke="#2a78d0" stroke-width="1" fill="none" opacity=".6"/><path d="M5.8 14.8 L6.8 16" stroke="#fff" stroke-width="1.1"/></svg>
<div class="a" style="left:1114.0px;top:1072px;width:6px;height:3px;background:#9a9a9a;border-radius:2px"></div>
<div class="a" style="left:1149px;top:1044px;width:24px;height:24px;background:#111;border-radius:3px"></div>
<svg class="a" style="left:1153px;top:1047px" width="16" height="18" viewBox="0 0 16 18"><path d="M8 1 L15 5 V13 L8 17 L1 13 V5Z" fill="#ddd"/><path d="M8 9 L15 5 V13 L8 17Z" fill="#888"/><path d="M8 9 L1 5 V13 L8 17Z" fill="#bbb"/></svg>
<div class="a" style="left:1158.0px;top:1072px;width:6px;height:3px;background:#9a9a9a;border-radius:2px"></div>
<svg class="a" style="left:1192px;top:1043px" width="26" height="26" viewBox="0 0 26 26"><path d="M13 2c6 0 11 4 11 9 0 3-2 4-4 4-2.5 0-3 2-2 4s-1 4-5 4C6 23 1 18 1 12S6 2 13 2z" fill="#48a8e8"/><circle cx="7" cy="10" r="2" fill="#f04040"/><circle cx="11" cy="6" r="2" fill="#f0c030"/><circle cx="17" cy="7" r="2" fill="#50c050"/><circle cx="6" cy="16" r="2" fill="#a050e0"/><path d="M22 3 L15 16" stroke="#c89050" stroke-width="2.5"/></svg>
<div class="a" style="left:1202.0px;top:1072px;width:6px;height:3px;background:#9a9a9a;border-radius:2px"></div>
<div class="a" style="left:1230px;top:1036px;width:38px;height:40px;background:#2c2929;border-radius:4px;border:1px solid #3a3737"></div>
<div class="a" style="left:1237px;top:1044px;width:25px;height:25px;background:#ef3a3a;"></div>
<svg class="a" style="left:1239px;top:1048px" width="21" height="17" viewBox="0 0 21 17"><path d="M6 2 L11 8.5 L6 15 L1 8.5Z" fill="#fff"/><path d="M11 2.5 L17 8.5 L11 14.5 L13.5 14.5 L19.5 8.5 L13.5 2.5Z" fill="#fff"/></svg>
<div class="a" style="left:1241px;top:1072px;width:16px;height:3px;background:#4cc2ff;border-radius:2px"></div>
<svg class="a" style="left:1690px;top:1050px" width="13" height="9" viewBox="0 0 13 9"><path d="M1 8 L6.5 2 L12 8" stroke="#f0f0f0" stroke-width="1.5" fill="none"/></svg>
<div class="t" style="left:1715.00px;width:40px;text-align:center;top:1043.19px;font-size:11px;color:#f0f0f0;">ESP</div>
<div class="t" style="left:1715.00px;width:40px;text-align:center;top:1059.19px;font-size:11px;color:#f0f0f0;">LAA</div>
<svg class="a" style="left:1764px;top:1048px" width="17" height="14" viewBox="0 0 17 14"><path d="M1 5a11 11 0 0 1 15 0M3.5 7.5a7.5 7.5 0 0 1 10 0M6 10a4 4 0 0 1 5 0" stroke="#f0f0f0" stroke-width="1.4" fill="none"/><circle cx="8.5" cy="12.3" r="1.3" fill="#f0f0f0"/></svg>
<svg class="a" style="left:1788px;top:1048px" width="16" height="15" viewBox="0 0 16 15"><path d="M1 5h3l4-3.5v12L4 10H1z" fill="none" stroke="#f0f0f0" stroke-width="1.2"/><path d="M10.5 5a3.5 3.5 0 0 1 0 5" stroke="#f0f0f0" stroke-width="1" fill="none"/><path d="M12.5 3a6.5 6.5 0 0 1 0 9" stroke="#999" stroke-width="1" fill="none"/></svg>
<svg class="a" style="left:1812px;top:1047px" width="18" height="16" viewBox="0 0 18 16"><rect x="1" y="5" width="14" height="8" rx="1.5" fill="none" stroke="#f0f0f0" stroke-width="1.2"/><rect x="15.5" y="7.5" width="1.5" height="3" fill="#f0f0f0"/><rect x="3" y="7" width="9" height="4" fill="#f0f0f0"/><path d="M4 0.5 L2 5 L5 5 L3.5 9" stroke="#f0f0f0" stroke-width="1.1" fill="none"/></svg>
<div class="t" style="left:1841.00px;width:60px;text-align:right;top:1042.93px;font-size:11.3px;color:#f0f0f0;">22:56</div>
<div class="t" style="left:1821.00px;width:80px;text-align:right;top:1058.93px;font-size:11.3px;color:#f0f0f0;">5/02/2026</div>
</body></html>
